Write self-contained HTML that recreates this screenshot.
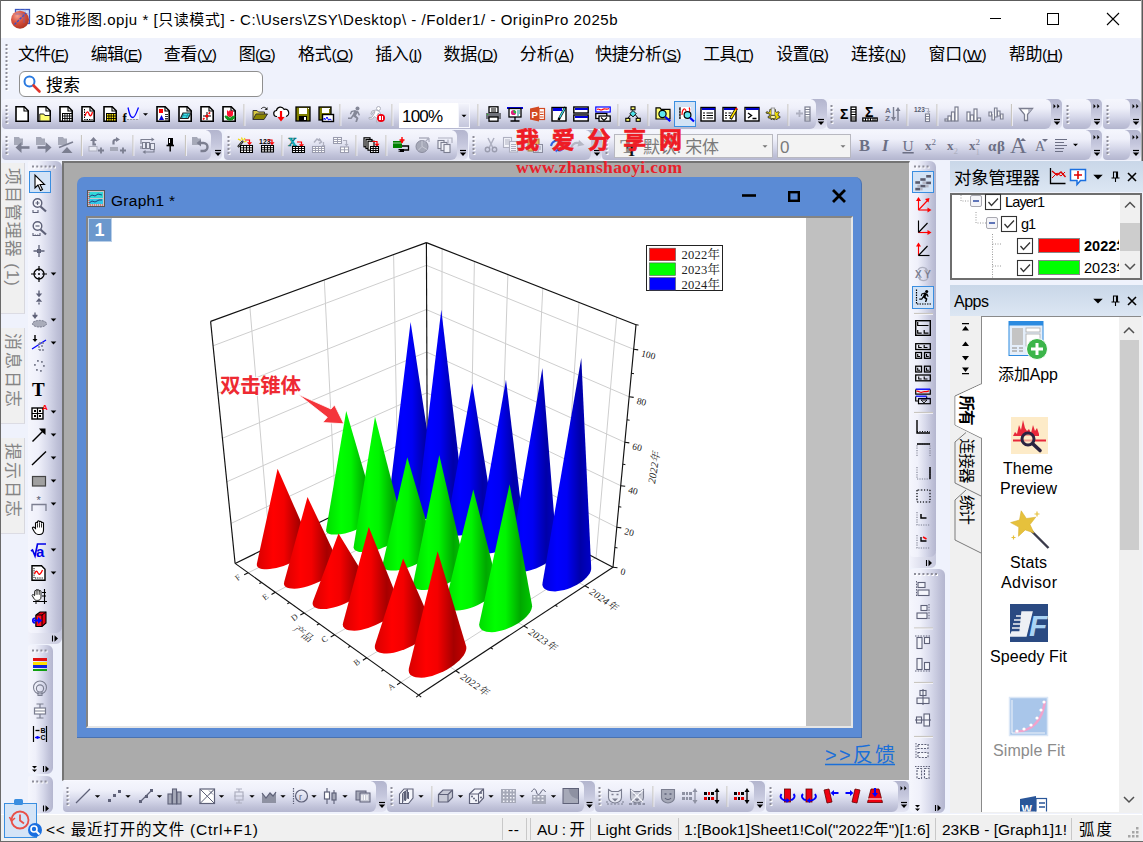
<!DOCTYPE html>
<html lang="zh-CN"><head><meta charset="utf-8"><title>OriginPro 2025b</title>
<style>
html,body{margin:0;padding:0;}
body{width:1143px;height:842px;overflow:hidden;background:#eff2fc;font-family:"Liberation Sans","Noto Sans CJK SC",sans-serif;}
#app{position:relative;width:1143px;height:842px;overflow:hidden;}
#app div{position:absolute;box-sizing:border-box;}
#ov{position:absolute;left:0;top:0;}
#ov text{font-family:"Liberation Sans","Noto Sans CJK SC",sans-serif;white-space:pre;}
.tb{background:linear-gradient(#f4f5fc 0%,#eceef8 35%,#c9cbe0 75%,#b3b4cc 100%);border-radius:4px;}
.tbv{background:linear-gradient(90deg,#f4f5fc 0%,#eceef8 35%,#c9cbe0 75%,#b3b4cc 100%);border-radius:4px;}
</style></head><body><div id="app">
<div style="left:0px;top:0px;width:1143px;height:842px;background:#eff2fc;"></div>
<div style="left:0px;top:0px;width:1143px;height:38px;background:#fff;"></div>
<div style="left:0px;top:0px;width:1143px;height:1px;background:#5c5c5c;"></div>
<div style="left:0px;top:0px;width:1px;height:842px;background:#6a6a6a;"></div>
<div style="left:1141px;top:0px;width:1px;height:161px;background:#a8a8a8;"></div>
<div style="left:1142px;top:0px;width:1px;height:161px;background:#5a5a5a;"></div>
<div style="left:0px;top:841px;width:1143px;height:1px;background:#6a6a6a;"></div>
<div style="left:19px;top:71px;width:244px;height:26px;background:#fff;border:1px solid #8f8f8f;border-radius:6px;"></div>
<div style="left:62px;top:161px;width:848px;height:620px;background:#ababab;border-left:2px solid #747474;border-top:2px solid #747474;border-right:1px solid #f8f8ff;border-bottom:1px solid #f8f8ff;"></div>
<div style="left:77px;top:177px;width:785px;height:561px;background:#5b8bd5;border-radius:7px 7px 0 0;border-right:1px solid #4a72b0;border-bottom:1px solid #4a72b0;"></div>
<div style="left:86px;top:216px;width:767px;height:512px;background:#c0c0c0;border:2px solid #848484;border-right-color:#e6e6e6;border-bottom-color:#e6e6e6;"></div>
<div style="left:88px;top:218px;width:718px;height:508px;background:#fff;"></div>
<div style="left:88px;top:218px;width:24px;height:24px;background:#6b98cd;border:1px solid #b9cfe8;"></div>
<div style="left:1px;top:814px;width:1141px;height:27px;background:#f0f0f0;border-top:1px solid #fff;"></div>
<div style="left:502px;top:818px;width:1px;height:22px;background:#c8c8c8;"></div>
<div style="left:526px;top:818px;width:1px;height:22px;background:#c8c8c8;"></div>
<div style="left:530px;top:818px;width:1px;height:22px;background:#c8c8c8;"></div>
<div style="left:590px;top:818px;width:1px;height:22px;background:#c8c8c8;"></div>
<div style="left:678px;top:818px;width:1px;height:22px;background:#c8c8c8;"></div>
<div style="left:935px;top:818px;width:1px;height:22px;background:#c8c8c8;"></div>
<div style="left:1071px;top:818px;width:1px;height:22px;background:#c8c8c8;"></div>
<div style="left:811px;top:99px;width:16px;height:30px;background:linear-gradient(#b3b5ce 0%,#c4c6dc 45%,#e3e4f2 100%);border-radius:0 5px 5px 0;"></div>
<div style="left:2px;top:99px;width:814px;height:30px;background:linear-gradient(#f5f6fd 0%,#eff0fa 30%,#d6d8ea 60%,#bfc1d8 85%,#b4b6cf 100%);border-radius:4px 6px 6px 4px;"></div>
<div style="left:1046px;top:99px;width:16px;height:30px;background:linear-gradient(#b3b5ce 0%,#c4c6dc 45%,#e3e4f2 100%);border-radius:0 5px 5px 0;"></div>
<div style="left:827px;top:99px;width:224px;height:30px;background:linear-gradient(#f5f6fd 0%,#eff0fa 30%,#d6d8ea 60%,#bfc1d8 85%,#b4b6cf 100%);border-radius:4px 6px 6px 4px;"></div>
<div style="left:1086px;top:99px;width:16px;height:30px;background:linear-gradient(#b3b5ce 0%,#c4c6dc 45%,#e3e4f2 100%);border-radius:0 5px 5px 0;"></div>
<div style="left:1063px;top:99px;width:28px;height:30px;background:linear-gradient(#f5f6fd 0%,#eff0fa 30%,#d6d8ea 60%,#bfc1d8 85%,#b4b6cf 100%);border-radius:4px 6px 6px 4px;"></div>
<div style="left:1125px;top:99px;width:16px;height:30px;background:linear-gradient(#b3b5ce 0%,#c4c6dc 45%,#e3e4f2 100%);border-radius:0 5px 5px 0;"></div>
<div style="left:1103px;top:99px;width:27px;height:30px;background:linear-gradient(#f5f6fd 0%,#eff0fa 30%,#d6d8ea 60%,#bfc1d8 85%,#b4b6cf 100%);border-radius:4px 6px 6px 4px;"></div>
<div style="left:674px;top:101px;width:22px;height:26px;background:#d3e3f6;border:1px solid #3a8ee0;"></div>
<div style="left:399px;top:103px;width:59px;height:25px;background:#fff;"></div>
<div style="left:458px;top:103px;width:12px;height:25px;background:linear-gradient(#f2f3fb,#c4c6dc);border:1px solid #f6f7fd;"></div>
<div style="left:206px;top:130px;width:16px;height:30px;background:linear-gradient(#b3b5ce 0%,#c4c6dc 45%,#e3e4f2 100%);border-radius:0 5px 5px 0;"></div>
<div style="left:2px;top:130px;width:209px;height:30px;background:linear-gradient(#f5f6fd 0%,#eff0fa 30%,#d6d8ea 60%,#bfc1d8 85%,#b4b6cf 100%);border-radius:4px 6px 6px 4px;"></div>
<div style="left:452px;top:130px;width:16px;height:30px;background:linear-gradient(#b3b5ce 0%,#c4c6dc 45%,#e3e4f2 100%);border-radius:0 5px 5px 0;"></div>
<div style="left:224px;top:130px;width:233px;height:30px;background:linear-gradient(#f5f6fd 0%,#eff0fa 30%,#d6d8ea 60%,#bfc1d8 85%,#b4b6cf 100%);border-radius:4px 6px 6px 4px;"></div>
<div style="left:586px;top:130px;width:16px;height:30px;background:linear-gradient(#b3b5ce 0%,#c4c6dc 45%,#e3e4f2 100%);border-radius:0 5px 5px 0;"></div>
<div style="left:469px;top:130px;width:122px;height:30px;background:linear-gradient(#f5f6fd 0%,#eff0fa 30%,#d6d8ea 60%,#bfc1d8 85%,#b4b6cf 100%);border-radius:4px 6px 6px 4px;"></div>
<div style="left:1086px;top:130px;width:16px;height:30px;background:linear-gradient(#b3b5ce 0%,#c4c6dc 45%,#e3e4f2 100%);border-radius:0 5px 5px 0;"></div>
<div style="left:602px;top:130px;width:489px;height:30px;background:linear-gradient(#f5f6fd 0%,#eff0fa 30%,#d6d8ea 60%,#bfc1d8 85%,#b4b6cf 100%);border-radius:4px 6px 6px 4px;"></div>
<div style="left:1125px;top:130px;width:16px;height:30px;background:linear-gradient(#b3b5ce 0%,#c4c6dc 45%,#e3e4f2 100%);border-radius:0 5px 5px 0;"></div>
<div style="left:1103px;top:130px;width:27px;height:30px;background:linear-gradient(#f5f6fd 0%,#eff0fa 30%,#d6d8ea 60%,#bfc1d8 85%,#b4b6cf 100%);border-radius:4px 6px 6px 4px;"></div>
<div style="left:614px;top:134px;width:159px;height:24px;background:#f3f3f3;border:1px solid #b8b8c0;"></div>
<div style="left:777px;top:134px;width:74px;height:24px;background:#f3f3f3;border:1px solid #b8b8c0;"></div>
<div style="left:1px;top:163px;width:24px;height:151px;background:#f0f0f0;border-right:1px solid #d8d8de;border-bottom:1px solid #dcdce4;"></div>
<div style="left:1px;top:328px;width:24px;height:96px;background:#f0f0f0;border-right:1px solid #d8d8de;border-bottom:1px solid #dcdce4;"></div>
<div style="left:1px;top:438px;width:24px;height:96px;background:#f0f0f0;border-right:1px solid #d8d8de;border-bottom:1px solid #dcdce4;"></div>
<div style="left:28px;top:628px;width:34px;height:16px;background:linear-gradient(90deg,#f1f2fb,#c6c8dd);border-radius:0 0 6px 4px;"></div>
<div style="left:28px;top:161px;width:34px;height:472px;background:linear-gradient(90deg,#f5f6fd 0%,#eff0fa 30%,#d6d8ea 60%,#bfc1d8 85%,#b4b6cf 100%);border-radius:2px 6px 6px 4px;"></div>
<div style="left:29px;top:171px;width:22px;height:22px;background:#d3e3f6;border:1px solid #3a8ee0;"></div>
<div style="left:28px;top:645px;width:25px;height:129px;background:linear-gradient(90deg,#f5f6fd 0%,#eff0fa 30%,#d6d8ea 60%,#bfc1d8 85%,#b4b6cf 100%);border-radius:2px 6px 6px 4px;"></div>
<div style="left:28px;top:776px;width:25px;height:37px;background:linear-gradient(90deg,#f5f6fd 0%,#eff0fa 30%,#d6d8ea 60%,#bfc1d8 85%,#b4b6cf 100%);border-radius:2px 6px 6px 4px;"></div>
<div style="left:910px;top:552px;width:26px;height:15.5px;background:linear-gradient(90deg,#f1f2fb,#c6c8dd);border-radius:0 0 5px 4px;"></div>
<div style="left:910px;top:161px;width:26px;height:396px;background:linear-gradient(90deg,#f5f6fd 0%,#eff0fa 30%,#d6d8ea 60%,#bfc1d8 85%,#b4b6cf 100%);border-radius:2px 6px 6px 4px;"></div>
<div style="left:912px;top:171px;width:22px;height:22px;background:#d3e3f6;border:1px solid #3a8ee0;"></div>
<div style="left:912px;top:286px;width:22px;height:23px;background:#d3e3f6;border:1px solid #3a8ee0;"></div>
<div style="left:910px;top:568.5px;width:35px;height:244.5px;background:linear-gradient(90deg,#f5f6fd 0%,#eff0fa 30%,#d6d8ea 60%,#bfc1d8 85%,#b4b6cf 100%);border-radius:2px 6px 6px 4px;"></div>
<div style="left:371px;top:781px;width:16px;height:31px;background:linear-gradient(#b3b5ce 0%,#c4c6dc 45%,#e3e4f2 100%);border-radius:0 5px 5px 0;"></div>
<div style="left:63px;top:781px;width:313px;height:31px;background:linear-gradient(#f5f6fd 0%,#eff0fa 30%,#d6d8ea 60%,#bfc1d8 85%,#b4b6cf 100%);border-radius:4px 6px 6px 4px;"></div>
<div style="left:579px;top:781px;width:16px;height:31px;background:linear-gradient(#b3b5ce 0%,#c4c6dc 45%,#e3e4f2 100%);border-radius:0 5px 5px 0;"></div>
<div style="left:387px;top:781px;width:197px;height:31px;background:linear-gradient(#f5f6fd 0%,#eff0fa 30%,#d6d8ea 60%,#bfc1d8 85%,#b4b6cf 100%);border-radius:4px 6px 6px 4px;"></div>
<div style="left:749px;top:781px;width:16px;height:31px;background:linear-gradient(#b3b5ce 0%,#c4c6dc 45%,#e3e4f2 100%);border-radius:0 5px 5px 0;"></div>
<div style="left:595px;top:781px;width:159px;height:31px;background:linear-gradient(#f5f6fd 0%,#eff0fa 30%,#d6d8ea 60%,#bfc1d8 85%,#b4b6cf 100%);border-radius:4px 6px 6px 4px;"></div>
<div style="left:893px;top:781px;width:16px;height:31px;background:linear-gradient(#b3b5ce 0%,#c4c6dc 45%,#e3e4f2 100%);border-radius:0 5px 5px 0;"></div>
<div style="left:766px;top:781px;width:132px;height:31px;background:linear-gradient(#f5f6fd 0%,#eff0fa 30%,#d6d8ea 60%,#bfc1d8 85%,#b4b6cf 100%);border-radius:4px 6px 6px 4px;"></div>
<div style="left:950px;top:161px;width:193px;height:31px;background:linear-gradient(#c9d7e8,#dce6f3);"></div>
<div style="left:950px;top:193px;width:192px;height:87px;background:#fff;border:2px solid #6e6e6e;"></div>
<div style="left:1120px;top:195px;width:20px;height:83px;background:#f0f0f0;"></div>
<div style="left:1120px;top:223px;width:20px;height:28px;background:#cdcdcd;"></div>
<div style="left:950px;top:285px;width:193px;height:31px;background:linear-gradient(#c9d7e8,#dce6f3);"></div>
<div style="left:950px;top:316px;width:192px;height:497px;background:#f0f0f0;"></div>
<div style="left:981px;top:316px;width:160px;height:496px;background:#fff;border-left:1px solid #8a8a8a;border-top:1px solid #8a8a8a;"></div>
<div style="left:1119px;top:317px;width:22px;height:495px;background:#f0f0f0;"></div>
<div style="left:1120px;top:340px;width:19px;height:210px;background:#cdcdcd;"></div>
<svg id="ov" width="1143" height="842" viewBox="0 0 1143 842">
<defs><radialGradient id="sph" cx=".35" cy=".3" r=".8"><stop offset="0" stop-color="#f4a090"/><stop offset=".45" stop-color="#d9523e"/><stop offset="1" stop-color="#a8301e"/></radialGradient><linearGradient id="gr"><stop offset="0" stop-color="#d80000"/><stop offset=".3" stop-color="#ff0000"/><stop offset=".5" stop-color="#f40000"/><stop offset=".78" stop-color="#a60000"/><stop offset="1" stop-color="#c80000"/></linearGradient><linearGradient id="gg"><stop offset="0" stop-color="#00dc00"/><stop offset=".3" stop-color="#00ff00"/><stop offset=".5" stop-color="#00f400"/><stop offset=".78" stop-color="#00a800"/><stop offset="1" stop-color="#00c800"/></linearGradient><linearGradient id="gb"><stop offset="0" stop-color="#0000dc"/><stop offset=".3" stop-color="#0000ff"/><stop offset=".5" stop-color="#0000f4"/><stop offset=".78" stop-color="#0000a8"/><stop offset="1" stop-color="#0000c8"/></linearGradient><clipPath id="wcc"><rect x="1000" y="790" width="60" height="21.500"/></clipPath></defs>
<text x="35.5" y="25" font-size="15" textLength="582" lengthAdjust="spacing">3D锥形图.opju * [只读模式] - C:\Users\ZSY\Desktop\ - /Folder1/ - OriginPro 2025b</text>
<path d="M990 18.5h11" stroke="#000" stroke-width="1" fill="none"/>
<rect x="1047.5" y="13.5" width="11" height="11" stroke="#000" stroke-width="1" fill="none"/>
<path d="M1107 13l12 12M1119 13l-12 12" stroke="#000" stroke-width="1.1" fill="none"/>
<g><rect x="15.500" y="9.500" width="14" height="14" fill="#d8e2f6" stroke="#3a56c0" stroke-width="1.300"/><path d="M20 9.500v14M25 9.500v14M15.500 14h14M15.500 19h14" stroke="#9ab0e8" stroke-width=".8"/><circle cx="20" cy="19.700" r="9" fill="url(#sph)"/><path d="M14.500 24.500 L26 13" stroke="#3a4fc8" stroke-width="1.400" stroke-dasharray="2.500 1.200"/><path d="M15.500 14h8.500v9" stroke="#5a6ad0" stroke-width=".8" fill="none" opacity=".7"/></g>
<text x="18" y="59.5" font-size="17" textLength="51" lengthAdjust="spacing">文件<tspan font-size="15.5">(<tspan text-decoration="underline">F</tspan>)</tspan></text>
<text x="90.75" y="59.5" font-size="17" textLength="51.75" lengthAdjust="spacing">编辑<tspan font-size="15.5">(<tspan text-decoration="underline">E</tspan>)</tspan></text>
<text x="163.75" y="59.5" font-size="17" textLength="53.25" lengthAdjust="spacing">查看<tspan font-size="15.5">(<tspan text-decoration="underline">V</tspan>)</tspan></text>
<text x="238.75" y="59.5" font-size="17" textLength="37" lengthAdjust="spacing">图<tspan font-size="15.5">(<tspan text-decoration="underline">G</tspan>)</tspan></text>
<text x="298" y="59.5" font-size="17" textLength="55.5" lengthAdjust="spacing">格式<tspan font-size="15.5">(<tspan text-decoration="underline">O</tspan>)</tspan></text>
<text x="375.25" y="59.5" font-size="17" textLength="47" lengthAdjust="spacing">插入<tspan font-size="15.5">(<tspan text-decoration="underline">I</tspan>)</tspan></text>
<text x="443.5" y="59.5" font-size="17" textLength="54.5" lengthAdjust="spacing">数据<tspan font-size="15.5">(<tspan text-decoration="underline">D</tspan>)</tspan></text>
<text x="519.75" y="59.5" font-size="17" textLength="54.5" lengthAdjust="spacing">分析<tspan font-size="15.5">(<tspan text-decoration="underline">A</tspan>)</tspan></text>
<text x="595.25" y="59.5" font-size="17" textLength="86.25" lengthAdjust="spacing">快捷分析<tspan font-size="15.5">(<tspan text-decoration="underline">S</tspan>)</tspan></text>
<text x="703.25" y="59.5" font-size="17" textLength="50.75" lengthAdjust="spacing">工具<tspan font-size="15.5">(<tspan text-decoration="underline">T</tspan>)</tspan></text>
<text x="776.25" y="59.5" font-size="17" textLength="52.75" lengthAdjust="spacing">设置<tspan font-size="15.5">(<tspan text-decoration="underline">R</tspan>)</tspan></text>
<text x="851" y="59.5" font-size="17" textLength="55.25" lengthAdjust="spacing">连接<tspan font-size="15.5">(<tspan text-decoration="underline">N</tspan>)</tspan></text>
<text x="928.5" y="59.5" font-size="17" textLength="58.25" lengthAdjust="spacing">窗口<tspan font-size="15.5">(<tspan text-decoration="underline">W</tspan>)</tspan></text>
<text x="1008.75" y="59.5" font-size="17" textLength="54.25" lengthAdjust="spacing">帮助<tspan font-size="15.5">(<tspan text-decoration="underline">H</tspan>)</tspan></text>
<rect x="6.5" y="45" width="2" height="2" fill="#fff"/><rect x="5.5" y="44" width="2" height="2" fill="#8e8e9a"/>
<rect x="6.5" y="49" width="2" height="2" fill="#fff"/><rect x="5.5" y="48" width="2" height="2" fill="#8e8e9a"/>
<rect x="6.5" y="53" width="2" height="2" fill="#fff"/><rect x="5.5" y="52" width="2" height="2" fill="#8e8e9a"/>
<rect x="6.5" y="57" width="2" height="2" fill="#fff"/><rect x="5.5" y="56" width="2" height="2" fill="#8e8e9a"/>
<rect x="6.5" y="61" width="2" height="2" fill="#fff"/><rect x="5.5" y="60" width="2" height="2" fill="#8e8e9a"/>
<rect x="6.5" y="65" width="2" height="2" fill="#fff"/><rect x="5.5" y="64" width="2" height="2" fill="#8e8e9a"/>
<rect x="6.5" y="69" width="2" height="2" fill="#fff"/><rect x="5.5" y="68" width="2" height="2" fill="#8e8e9a"/>
<rect x="6.5" y="73" width="2" height="2" fill="#fff"/><rect x="5.5" y="72" width="2" height="2" fill="#8e8e9a"/>
<rect x="6.5" y="77" width="2" height="2" fill="#fff"/><rect x="5.5" y="76" width="2" height="2" fill="#8e8e9a"/>
<rect x="6.5" y="81" width="2" height="2" fill="#fff"/><rect x="5.5" y="80" width="2" height="2" fill="#8e8e9a"/>
<rect x="6.5" y="85" width="2" height="2" fill="#fff"/><rect x="5.5" y="84" width="2" height="2" fill="#8e8e9a"/>
<rect x="6.5" y="89" width="2" height="2" fill="#fff"/><rect x="5.5" y="88" width="2" height="2" fill="#8e8e9a"/>
<text x="46" y="91" font-size="17" textLength="34" lengthAdjust="spacing">搜索</text>
<g fill="none"><circle cx="29.5" cy="81.5" r="5" stroke="#2a7ae0" stroke-width="2"/><path d="M33.5 85.5l6 6" stroke="#e0352b" stroke-width="2.6" stroke-linecap="round"/></g>
<text x="99.5" y="236" font-size="18" fill="#fff" font-weight="bold" text-anchor="middle">1</text>
<text x="111" y="206" font-size="15.5" textLength="64" lengthAdjust="spacing">Graph1 *</text>
<g><rect x="87.5" y="190.5" width="17" height="16" fill="#c8c8c8" stroke="#555" stroke-width="1"/><rect x="89" y="192" width="14" height="6" fill="#30d8d8"/><rect x="89" y="199" width="14" height="5" fill="#30c8e8"/><path d="M89 197l3-2 3 1 3-2 4 1M89 203l3-2 3 1 4-2 3 0" stroke="#204080" stroke-width="1" fill="none"/><path d="M89 192v13h14" stroke="#e03030" stroke-width="1" fill="none" stroke-dasharray="1 1"/></g>
<path d="M742 195.5h14" stroke="#000" stroke-width="2.6"/>
<rect x="789.2" y="192.2" width="9.6" height="8.6" stroke="#000" stroke-width="2.4" fill="none"/>
<path d="M833 190l12 12M845 190l-12 12" stroke="#000" stroke-width="2.8"/>
<text x="825" y="762" font-size="20" textLength="70" lengthAdjust="spacing" fill="#1b6fd8">&gt;&gt;反馈</text>
<path d="M825 764.500h70" stroke="#1b6fd8" stroke-width="1.300"/>
<g><path d="M269.8,546.5L249.9,307.0" stroke="#cecece" stroke-width="1" fill="none"/><path d="M455.8,670.7L271.1,545.9" stroke="#cecece" stroke-width="1" fill="none"/><path d="M335.9,514.4L324.3,279.9" stroke="#cecece" stroke-width="1" fill="none"/><path d="M523.8,625.9L337.9,513.4" stroke="#cecece" stroke-width="1" fill="none"/><path d="M397.8,484.3L393.6,254.6" stroke="#cecece" stroke-width="1" fill="none"/><path d="M584.8,585.8L398.8,483.8" stroke="#cecece" stroke-width="1" fill="none"/><path d="M596.0,558.3L616.6,317.1" stroke="#cecece" stroke-width="1" fill="none"/><path d="M400.9,682.3L595.3,558.0" stroke="#cecece" stroke-width="1" fill="none"/><path d="M562.9,541.0L579.0,302.4" stroke="#cecece" stroke-width="1" fill="none"/><path d="M366.8,657.8L561.4,540.2" stroke="#cecece" stroke-width="1" fill="none"/><path d="M531.0,524.3L542.8,288.2" stroke="#cecece" stroke-width="1" fill="none"/><path d="M334.6,634.8L529.0,523.2" stroke="#cecece" stroke-width="1" fill="none"/><path d="M500.1,508.1L507.9,274.5" stroke="#cecece" stroke-width="1" fill="none"/><path d="M304.2,613.0L498.2,507.1" stroke="#cecece" stroke-width="1" fill="none"/><path d="M470.3,492.5L474.4,261.4" stroke="#cecece" stroke-width="1" fill="none"/><path d="M275.4,592.3L468.9,491.8" stroke="#cecece" stroke-width="1" fill="none"/><path d="M441.4,477.4L442.1,248.8" stroke="#cecece" stroke-width="1" fill="none"/><path d="M248.2,572.8L440.8,477.1" stroke="#cecece" stroke-width="1" fill="none"/><path d="M231.1,523.4L427.1,432.1" stroke="#cecece" stroke-width="1" fill="none"/><path d="M616.8,527.3L427.2,432.2" stroke="#cecece" stroke-width="1" fill="none"/><path d="M226.8,481.8L427.0,392.7" stroke="#cecece" stroke-width="1" fill="none"/><path d="M620.7,485.7L427.0,393.0" stroke="#cecece" stroke-width="1" fill="none"/><path d="M222.4,438.3L426.8,351.9" stroke="#cecece" stroke-width="1" fill="none"/><path d="M624.8,442.3L426.8,352.1" stroke="#cecece" stroke-width="1" fill="none"/><path d="M217.9,393.1L426.7,309.4" stroke="#cecece" stroke-width="1" fill="none"/><path d="M629.2,396.8L426.7,309.7" stroke="#cecece" stroke-width="1" fill="none"/><path d="M213.1,345.8L426.5,265.3" stroke="#cecece" stroke-width="1" fill="none"/><path d="M633.7,349.3L426.5,265.4" stroke="#cecece" stroke-width="1" fill="none"/><path d="M210.6,321.4L426.4,242.6" stroke="#111" stroke-width="1.15" fill="none"/><path d="M426.4,242.6L636.0,324.7" stroke="#111" stroke-width="1.15" fill="none"/><path d="M210.6,321.4L235.1,563.4" stroke="#111" stroke-width="1.15" fill="none"/><path d="M426.4,242.6L427.3,470.0" stroke="#111" stroke-width="1.15" fill="none"/><path d="M636.0,324.7L613.0,567.2" stroke="#111" stroke-width="1.15" fill="none"/><path d="M235.1,563.4L427.3,470.0" stroke="#111" stroke-width="1.15" fill="none"/><path d="M427.3,470.0L613.0,567.2" stroke="#111" stroke-width="1.15" fill="none"/><path d="M235.1,563.4L418.7,695.1" stroke="#111" stroke-width="1.15" fill="none"/><path d="M418.7,695.1L613.0,567.2" stroke="#111" stroke-width="1.15" fill="none"/><path d="M613.0,567.2L617.5,567.8" stroke="#111" stroke-width="1.1" fill="none"/><path d="M614.9,547.5L617.5,547.9" stroke="#111" stroke-width="1" fill="none"/><path d="M616.8,527.3L621.3,527.9" stroke="#111" stroke-width="1.1" fill="none"/><path d="M618.7,506.7L621.3,507.1" stroke="#111" stroke-width="1" fill="none"/><path d="M620.7,485.7L625.2,486.3" stroke="#111" stroke-width="1.1" fill="none"/><path d="M622.8,464.2L625.4,464.6" stroke="#111" stroke-width="1" fill="none"/><path d="M624.8,442.3L629.3,442.9" stroke="#111" stroke-width="1.1" fill="none"/><path d="M627.0,419.8L629.6,420.2" stroke="#111" stroke-width="1" fill="none"/><path d="M629.2,396.8L633.7,397.4" stroke="#111" stroke-width="1.1" fill="none"/><path d="M631.4,373.3L634.0,373.7" stroke="#111" stroke-width="1" fill="none"/><path d="M633.7,349.3L638.2,349.9" stroke="#111" stroke-width="1.1" fill="none"/><path d="M636.0,324.7L638.6,325.1" stroke="#111" stroke-width="1" fill="none"/><path d="M455.8,670.7L459.5,673.2" stroke="#111" stroke-width="1.1" fill="none"/><path d="M490.7,647.7L492.9,649.1" stroke="#111" stroke-width="1.1" fill="none"/><path d="M523.8,625.9L527.7,628.2" stroke="#111" stroke-width="1.1" fill="none"/><path d="M555.1,605.3L557.4,606.6" stroke="#111" stroke-width="1.1" fill="none"/><path d="M584.8,585.8L588.8,587.9" stroke="#111" stroke-width="1.1" fill="none"/><path d="M400.9,682.3L397.1,684.7" stroke="#111" stroke-width="1.1" fill="none"/><path d="M383.6,669.9L381.4,671.3" stroke="#111" stroke-width="1.1" fill="none"/><path d="M366.8,657.8L362.9,660.2" stroke="#111" stroke-width="1.1" fill="none"/><path d="M350.4,646.1L348.2,647.5" stroke="#111" stroke-width="1.1" fill="none"/><path d="M334.6,634.8L330.7,637.0" stroke="#111" stroke-width="1.1" fill="none"/><path d="M319.2,623.7L316.9,625.0" stroke="#111" stroke-width="1.1" fill="none"/><path d="M304.2,613.0L300.3,615.1" stroke="#111" stroke-width="1.1" fill="none"/><path d="M289.6,602.5L287.3,603.7" stroke="#111" stroke-width="1.1" fill="none"/><path d="M275.4,592.3L271.5,594.4" stroke="#111" stroke-width="1.1" fill="none"/><path d="M261.6,582.4L259.3,583.6" stroke="#111" stroke-width="1.1" fill="none"/><path d="M248.2,572.8L244.2,574.8" stroke="#111" stroke-width="1.1" fill="none"/><path d="M418.7,695.1L421.2,697.1" stroke="#111" stroke-width="1.1" fill="none"/><path d="M418.7,695.1L416.2,697.1" stroke="#111" stroke-width="1.1" fill="none"/></g>
<g stroke="none"><path d="M388.9,498.9L389.1,497.6L410.6,322.0L435.2,483.8L435.2,485.0L434.8,486.3L434.0,487.7L432.9,489.2L431.4,490.7L429.5,492.2L427.4,493.8L424.9,495.3L422.3,496.7L419.5,498.0L416.5,499.2L413.5,500.3L410.4,501.3L407.3,502.0L404.4,502.6L401.5,503.0L398.9,503.2L396.5,503.1L394.3,502.9L392.5,502.5L391.0,501.8L390.0,501.0L389.2,500.0Z" fill="url(#gb)"/><path d="M416.7,514.6L416.8,513.3L441.3,309.7L463.4,498.8L463.5,500.0L463.1,501.4L462.4,502.9L461.3,504.4L459.8,506.0L458.0,507.6L455.8,509.2L453.4,510.8L450.8,512.3L447.9,513.7L445.0,515.0L441.9,516.1L438.8,517.1L435.7,517.9L432.7,518.5L429.8,518.9L427.1,519.1L424.6,519.1L422.4,518.8L420.5,518.4L419.0,517.7L417.8,516.8L417.1,515.8Z" fill="url(#gb)"/><path d="M445.9,529.7L472.3,383.4L493.0,514.5L493.1,515.8L492.8,517.2L492.1,518.8L491.0,520.4L489.6,522.1L487.8,523.8L485.7,525.5L483.3,527.1L480.7,528.7L477.8,530.1L474.8,531.5L471.7,532.7L468.6,533.7L465.5,534.6L462.4,535.2L459.5,535.6L456.7,535.8L454.2,535.8L451.9,535.5L450.0,535.0L448.4,534.3L447.1,533.4L446.3,532.3L445.9,531.1Z" fill="url(#gb)"/><path d="M476.4,547.0L506.0,379.7L524.2,532.3L523.9,533.9L523.3,535.5L522.3,537.2L520.9,539.0L519.1,540.7L517.0,542.5L514.7,544.2L512.0,545.9L509.2,547.4L506.2,548.8L503.1,550.1L499.9,551.2L496.7,552.1L493.6,552.7L490.6,553.2L487.8,553.4L485.2,553.4L482.9,553.1L480.9,552.6L479.2,551.8L477.9,550.9L477.0,549.7L476.5,548.4Z" fill="url(#gb)"/><path d="M508.6,565.1L508.9,563.4L542.4,368.0L556.8,549.7L556.7,551.3L556.1,553.0L555.1,554.8L553.8,556.7L552.1,558.6L550.0,560.4L547.7,562.2L545.0,564.0L542.2,565.6L539.2,567.1L536.0,568.4L532.8,569.6L529.6,570.5L526.5,571.2L523.4,571.7L520.6,571.9L517.9,571.8L515.5,571.6L513.4,571.0L511.6,570.2L510.3,569.2L509.3,568.0L508.7,566.7Z" fill="url(#gb)"/><path d="M542.4,584.2L542.6,582.5L581.3,358.0L591.2,568.0L591.1,569.7L590.6,571.5L589.7,573.4L588.4,575.3L586.7,577.3L584.7,579.3L582.4,581.2L579.8,583.0L577.0,584.7L573.9,586.3L570.8,587.7L567.6,588.9L564.3,589.9L561.1,590.6L558.0,591.1L555.1,591.4L552.3,591.3L549.8,591.0L547.6,590.4L545.8,589.6L544.3,588.6L543.3,587.3L542.6,585.9Z" fill="url(#gb)"/><path d="M326.1,529.9L346.2,411.1L375.8,512.2L376.0,513.4L375.9,514.7L375.4,516.1L374.4,517.7L373.0,519.3L371.3,521.0L369.2,522.6L366.8,524.3L364.1,525.9L361.2,527.5L358.1,529.0L354.9,530.3L351.6,531.5L348.3,532.6L345.0,533.4L341.8,534.0L338.8,534.5L336.0,534.6L333.5,534.6L331.3,534.4L329.4,533.9L328.0,533.2L326.9,532.3L326.3,531.2Z" fill="url(#gg)"/><path d="M353.6,547.2L353.8,545.8L375.0,416.7L404.1,529.8L404.1,531.2L403.6,532.7L402.6,534.3L401.3,536.0L399.6,537.8L397.6,539.5L395.2,541.3L392.5,543.0L389.6,544.7L386.4,546.2L383.2,547.6L379.9,548.9L376.5,550.0L373.2,550.9L370.0,551.5L366.9,552.0L364.0,552.2L361.5,552.1L359.2,551.9L357.2,551.3L355.7,550.6L354.6,549.7L353.9,548.5Z" fill="url(#gg)"/><path d="M382.6,565.4L382.7,563.9L407.3,457.3L433.7,547.0L433.6,548.5L433.2,550.1L432.3,551.8L431.0,553.6L429.4,555.4L427.3,557.3L425.0,559.2L422.3,561.0L419.4,562.7L416.2,564.3L413.0,565.8L409.6,567.1L406.2,568.3L402.8,569.2L399.6,569.9L396.4,570.4L393.5,570.6L390.8,570.6L388.5,570.3L386.5,569.7L384.9,569.0L383.7,568.0L382.9,566.8Z" fill="url(#gg)"/><path d="M413.1,584.5L413.2,582.9L439.3,455.1L464.7,565.2L464.7,566.7L464.4,568.4L463.6,570.2L462.3,572.1L460.7,574.0L458.7,576.0L456.3,578.0L453.7,579.9L450.7,581.7L447.6,583.4L444.3,585.0L440.9,586.4L437.5,587.6L434.1,588.6L430.7,589.3L427.5,589.8L424.6,590.0L421.8,590.0L419.4,589.7L417.3,589.1L415.6,588.3L414.4,587.2L413.5,586.0Z" fill="url(#gg)"/><path d="M445.3,603.0L445.8,601.2L473.3,489.4L497.4,584.3L497.5,586.0L497.2,587.7L496.4,589.6L495.3,591.6L493.7,593.6L491.7,595.7L489.4,597.8L486.7,599.8L483.8,601.7L480.7,603.5L477.4,605.2L474.0,606.7L470.5,607.9L467.0,609.0L463.6,609.7L460.4,610.3L457.3,610.5L454.5,610.5L452.0,610.1L449.8,609.5L448.1,608.7L446.7,607.6L445.8,606.2L445.3,604.7Z" fill="url(#gg)"/><path d="M479.2,624.2L479.6,622.3L509.6,484.2L531.9,604.5L532.1,606.2L531.8,608.1L531.2,610.1L530.0,612.2L528.5,614.3L526.6,616.5L524.3,618.7L521.7,620.8L518.8,622.9L515.6,624.8L512.3,626.5L508.9,628.1L505.3,629.4L501.8,630.5L498.4,631.3L495.1,631.9L491.9,632.2L489.0,632.1L486.4,631.8L484.2,631.1L482.3,630.2L480.9,629.1L479.9,627.6L479.3,626.0Z" fill="url(#gg)"/><path d="M256.8,564.1L277.6,468.8L310.9,544.5L311.1,545.8L310.8,547.3L310.1,548.9L308.9,550.6L307.3,552.4L305.3,554.2L302.9,556.1L300.2,557.9L297.3,559.7L294.0,561.4L290.6,563.1L287.1,564.5L283.5,565.9L279.9,567.0L276.4,567.9L273.0,568.6L269.8,569.1L266.8,569.3L264.2,569.3L261.9,569.0L260.0,568.5L258.5,567.7L257.5,566.7L256.9,565.5Z" fill="url(#gr)"/><path d="M284.0,583.2L284.3,581.6L307.5,497.0L338.6,562.6L338.9,563.9L338.7,565.5L338.0,567.2L336.9,568.9L335.3,570.8L333.3,572.8L331.0,574.7L328.3,576.7L325.3,578.6L322.1,580.4L318.6,582.1L315.1,583.6L311.4,585.0L307.8,586.2L304.2,587.2L300.7,588.0L297.5,588.4L294.4,588.7L291.7,588.6L289.3,588.3L287.4,587.8L285.8,587.0L284.7,585.9L284.1,584.6Z" fill="url(#gr)"/><path d="M312.6,603.3L312.9,601.6L338.5,533.4L367.1,580.3L367.9,581.6L368.2,583.0L368.0,584.6L367.4,586.4L366.3,588.3L364.8,590.3L362.9,592.3L360.5,594.4L357.8,596.4L354.8,598.4L351.6,600.3L348.1,602.1L344.5,603.8L340.9,605.3L337.2,606.5L333.5,607.6L330.0,608.3L326.7,608.9L323.6,609.1L320.8,609.1L318.3,608.7L316.3,608.1L314.6,607.3L313.5,606.2L312.8,604.8Z" fill="url(#gr)"/><path d="M342.8,624.6L343.1,622.8L368.8,527.0L398.7,601.6L399.1,603.1L399.0,604.8L398.4,606.7L397.4,608.7L395.9,610.8L394.0,612.9L391.7,615.1L389.0,617.3L386.0,619.4L382.8,621.4L379.3,623.3L375.7,625.1L372.0,626.6L368.2,627.9L364.5,629.0L360.9,629.9L357.5,630.4L354.3,630.7L351.5,630.6L348.9,630.3L346.8,629.7L345.1,628.7L343.9,627.6L343.1,626.2Z" fill="url(#gr)"/><path d="M374.8,647.0L375.0,645.1L375.6,643.1L403.1,558.6L431.3,622.7L431.7,624.3L431.7,626.1L431.2,628.1L430.2,630.2L428.8,632.4L426.9,634.7L424.7,637.0L422.0,639.3L419.0,641.5L415.8,643.7L412.3,645.7L408.6,647.6L404.9,649.2L401.1,650.6L397.3,651.8L393.7,652.7L390.2,653.2L386.9,653.5L383.9,653.5L381.3,653.1L379.1,652.4L377.3,651.5L376.0,650.2L375.1,648.7Z" fill="url(#gr)"/><path d="M408.7,670.8L408.8,668.8L437.6,551.3L466.3,646.8L466.3,648.7L465.9,650.8L465.0,653.0L463.6,655.4L461.8,657.8L459.6,660.2L456.9,662.6L454.0,665.0L450.7,667.3L447.2,669.4L443.5,671.4L439.7,673.1L435.9,674.6L432.1,675.9L428.3,676.8L424.8,677.4L421.4,677.7L418.4,677.6L415.7,677.3L413.3,676.6L411.5,675.5L410.0,674.2L409.1,672.7Z" fill="url(#gr)"/></g>
<text x="620.0" y="574.2" font-size="9.5" fill="#222" style='font-family:"Liberation Serif","Noto Serif CJK SC",serif' transform="rotate(13 620.0 574.2)">0</text>
<text x="623.8" y="534.3" font-size="9.5" fill="#222" style='font-family:"Liberation Serif","Noto Serif CJK SC",serif' transform="rotate(13 623.8 534.3)">20</text>
<text x="627.7" y="492.7" font-size="9.5" fill="#222" style='font-family:"Liberation Serif","Noto Serif CJK SC",serif' transform="rotate(13 627.7 492.7)">40</text>
<text x="631.8" y="449.3" font-size="9.5" fill="#222" style='font-family:"Liberation Serif","Noto Serif CJK SC",serif' transform="rotate(13 631.8 449.3)">60</text>
<text x="636.2" y="403.8" font-size="9.5" fill="#222" style='font-family:"Liberation Serif","Noto Serif CJK SC",serif' transform="rotate(13 636.2 403.8)">80</text>
<text x="640.7" y="356.3" font-size="9.5" fill="#222" style='font-family:"Liberation Serif","Noto Serif CJK SC",serif' transform="rotate(13 640.7 356.3)">100</text>
<text x="655" y="484" font-size="10.5" textLength="32" lengthAdjust="spacing" fill="#222" style='font-family:"Liberation Serif","Noto Serif CJK SC",serif' font-style="italic" transform="rotate(-81 655 484)">2022年</text>
<text x="459.8" y="678.2" font-size="10" textLength="31.5" lengthAdjust="spacing" fill="#222" style='font-family:"Liberation Serif","Noto Serif CJK SC",serif' font-style="italic" transform="rotate(35 459.8 678.2)">2022年</text>
<text x="527.8" y="633.4" font-size="10" textLength="31.5" lengthAdjust="spacing" fill="#222" style='font-family:"Liberation Serif","Noto Serif CJK SC",serif' font-style="italic" transform="rotate(35 527.8 633.4)">2023年</text>
<text x="588.8" y="593.3" font-size="10" textLength="31.5" lengthAdjust="spacing" fill="#222" style='font-family:"Liberation Serif","Noto Serif CJK SC",serif' font-style="italic" transform="rotate(35 588.8 593.3)">2024年</text>
<text x="390.4" y="690.8" font-size="8.5" fill="#333" style='font-family:"Liberation Serif","Noto Serif CJK SC",serif' transform="rotate(-38 390.4 690.8)">A</text>
<text x="356.3" y="666.3" font-size="8.5" fill="#333" style='font-family:"Liberation Serif","Noto Serif CJK SC",serif' transform="rotate(-38 356.3 666.3)">B</text>
<text x="324.1" y="643.3" font-size="8.5" fill="#333" style='font-family:"Liberation Serif","Noto Serif CJK SC",serif' transform="rotate(-38 324.1 643.3)">C</text>
<text x="293.7" y="621.5" font-size="8.5" fill="#333" style='font-family:"Liberation Serif","Noto Serif CJK SC",serif' transform="rotate(-38 293.7 621.5)">D</text>
<text x="264.9" y="600.8" font-size="8.5" fill="#333" style='font-family:"Liberation Serif","Noto Serif CJK SC",serif' transform="rotate(-38 264.9 600.8)">E</text>
<text x="237.7" y="581.3" font-size="8.5" fill="#333" style='font-family:"Liberation Serif","Noto Serif CJK SC",serif' transform="rotate(-38 237.7 581.3)">F</text>
<text x="292" y="630" font-size="10.5" fill="#222" style='font-family:"Liberation Serif","Noto Serif CJK SC",serif' font-style="italic" transform="rotate(36 292 630)">产品</text>
<rect x="646.5" y="245.5" width="76" height="45" fill="#fff" stroke="#222" stroke-width="1"/>
<rect x="649.5" y="248.2" width="26" height="12.5" fill="#ff0000" stroke="#555" stroke-width=".6"/>
<text x="681.5" y="259.1" font-size="12.5" textLength="38.5" lengthAdjust="spacing" fill="#222" style='font-family:"Liberation Serif","Noto Serif CJK SC",serif'>2022年</text>
<rect x="649.5" y="262.9" width="26" height="12.5" fill="#00ff00" stroke="#555" stroke-width=".6"/>
<text x="681.5" y="273.8" font-size="12.5" textLength="38.5" lengthAdjust="spacing" fill="#222" style='font-family:"Liberation Serif","Noto Serif CJK SC",serif'>2023年</text>
<rect x="649.5" y="277.6" width="26" height="12.5" fill="#0000ff" stroke="#555" stroke-width=".6"/>
<text x="681.5" y="288.5" font-size="12.5" textLength="38.5" lengthAdjust="spacing" fill="#222" style='font-family:"Liberation Serif","Noto Serif CJK SC",serif'>2024年</text>
<text x="220" y="393" font-size="20.5" textLength="81" lengthAdjust="spacing" fill="#ee2a32" font-weight="bold" stroke="#fff" stroke-width="1.300" paint-order="stroke" stroke-linejoin="round">双击锥体</text>
<path d="M298 394.300 L331 409 L334.500 405 L343.800 423.800 L322.800 422.500 L327.300 417.300 Z" fill="#f4353b" stroke="#fff" stroke-width="0.8"/>
<text x="46" y="835" font-size="15.5" textLength="212" lengthAdjust="spacing">&lt;&lt; 最近打开的文件 (Ctrl+F1)</text>
<text x="508" y="835" font-size="15.5" textLength="11" lengthAdjust="spacing">--</text>
<text x="537" y="835" font-size="15.5" textLength="48" lengthAdjust="spacing">AU : 开</text>
<text x="597" y="835" font-size="15.5" textLength="75" lengthAdjust="spacing">Light Grids</text>
<text x="684" y="835" font-size="15.5" textLength="246" lengthAdjust="spacing">1:[Book1]Sheet1!Col("2022年")[1:6]</text>
<text x="942" y="835" font-size="15.5" textLength="125" lengthAdjust="spacing">23KB - [Graph1]1!</text>
<text x="1079" y="835" font-size="15.5" textLength="33" lengthAdjust="spacing">弧度</text>
<rect x="1136" y="835" width="2.500" height="2.500" fill="#a6a6a6"/>
<rect x="1132" y="835" width="2.500" height="2.500" fill="#a6a6a6"/>
<rect x="1128" y="835" width="2.500" height="2.500" fill="#a6a6a6"/>
<rect x="1136" y="831" width="2.500" height="2.500" fill="#a6a6a6"/>
<rect x="1132" y="831" width="2.500" height="2.500" fill="#a6a6a6"/>
<rect x="1136" y="827" width="2.500" height="2.500" fill="#a6a6a6"/>
<rect x="6.5" y="106" width="2" height="2" fill="#fff"/><rect x="5.5" y="105" width="2" height="2" fill="#8e8e9a"/>
<rect x="6.5" y="110" width="2" height="2" fill="#fff"/><rect x="5.5" y="109" width="2" height="2" fill="#8e8e9a"/>
<rect x="6.5" y="114" width="2" height="2" fill="#fff"/><rect x="5.5" y="113" width="2" height="2" fill="#8e8e9a"/>
<rect x="6.5" y="118" width="2" height="2" fill="#fff"/><rect x="5.5" y="117" width="2" height="2" fill="#8e8e9a"/>
<rect x="6.5" y="122" width="2" height="2" fill="#fff"/><rect x="5.5" y="121" width="2" height="2" fill="#8e8e9a"/>
<path d="M818 119.5h6" stroke="#000" stroke-width="1.2"/><path d="M817.8 121.5h6.4l-3.2 3.6z" fill="#000"/>
<rect x="831.5" y="106" width="2" height="2" fill="#fff"/><rect x="830.5" y="105" width="2" height="2" fill="#8e8e9a"/>
<rect x="831.5" y="110" width="2" height="2" fill="#fff"/><rect x="830.5" y="109" width="2" height="2" fill="#8e8e9a"/>
<rect x="831.5" y="114" width="2" height="2" fill="#fff"/><rect x="830.5" y="113" width="2" height="2" fill="#8e8e9a"/>
<rect x="831.5" y="118" width="2" height="2" fill="#fff"/><rect x="830.5" y="117" width="2" height="2" fill="#8e8e9a"/>
<rect x="831.5" y="122" width="2" height="2" fill="#fff"/><rect x="830.5" y="121" width="2" height="2" fill="#8e8e9a"/>
<path d="M1054 119.5h6" stroke="#000" stroke-width="1.2"/><path d="M1053.8 121.5h6.4l-3.2 3.6z" fill="#000"/>
<path d="M1053.5 104l2.2 2.2-2.2 2.2zM1057.3 104l2.2 2.2-2.2 2.2z" fill="#000"/>
<rect x="1067.5" y="106" width="2" height="2" fill="#fff"/><rect x="1066.5" y="105" width="2" height="2" fill="#8e8e9a"/>
<rect x="1067.5" y="110" width="2" height="2" fill="#fff"/><rect x="1066.5" y="109" width="2" height="2" fill="#8e8e9a"/>
<rect x="1067.5" y="114" width="2" height="2" fill="#fff"/><rect x="1066.5" y="113" width="2" height="2" fill="#8e8e9a"/>
<rect x="1067.5" y="118" width="2" height="2" fill="#fff"/><rect x="1066.5" y="117" width="2" height="2" fill="#8e8e9a"/>
<rect x="1067.5" y="122" width="2" height="2" fill="#fff"/><rect x="1066.5" y="121" width="2" height="2" fill="#8e8e9a"/>
<path d="M1094 119.5h6" stroke="#000" stroke-width="1.2"/><path d="M1093.8 121.5h6.4l-3.2 3.6z" fill="#000"/>
<path d="M1093.5 104l2.2 2.2-2.2 2.2zM1097.3 104l2.2 2.2-2.2 2.2z" fill="#000"/>
<rect x="1107.5" y="106" width="2" height="2" fill="#fff"/><rect x="1106.5" y="105" width="2" height="2" fill="#8e8e9a"/>
<rect x="1107.5" y="110" width="2" height="2" fill="#fff"/><rect x="1106.5" y="109" width="2" height="2" fill="#8e8e9a"/>
<rect x="1107.5" y="114" width="2" height="2" fill="#fff"/><rect x="1106.5" y="113" width="2" height="2" fill="#8e8e9a"/>
<rect x="1107.5" y="118" width="2" height="2" fill="#fff"/><rect x="1106.5" y="117" width="2" height="2" fill="#8e8e9a"/>
<rect x="1107.5" y="122" width="2" height="2" fill="#fff"/><rect x="1106.5" y="121" width="2" height="2" fill="#8e8e9a"/>
<path d="M1133 119.5h6" stroke="#000" stroke-width="1.2"/><path d="M1132.8 121.5h6.4l-3.2 3.6z" fill="#000"/>
<path d="M1132.5 104l2.2 2.2-2.2 2.2zM1136.3 104l2.2 2.2-2.2 2.2z" fill="#000"/>
<svg x="15" y="106" width="16" height="16" viewBox="0 0 16 16" overflow="visible"><path d="M1 .8h8.2l4 4V15.2H1z" stroke="#000" fill="#fff" stroke-width="1.6" stroke-linejoin="miter"/><path d="M9 1v4h4" stroke="#000" fill="none" stroke-width="1.1"/></svg>
<svg x="37" y="106" width="16" height="16" viewBox="0 0 16 16" overflow="visible"><path d="M1 .8h8.2l4 4V15.2H1z" stroke="#000" fill="#fff" stroke-width="1.6" stroke-linejoin="miter"/><path d="M9 1v4h4" stroke="#000" fill="none" stroke-width="1.1"/><path d="M2.8 8h4l1 1.500h5.200v5.500H2.800z" stroke="#222" fill="#ffff70" stroke-width="1"/></svg>
<svg x="59" y="106" width="16" height="16" viewBox="0 0 16 16" overflow="visible"><path d="M1 .8h8.2l4 4V15.2H1z" stroke="#000" fill="#fff" stroke-width="1.6" stroke-linejoin="miter"/><path d="M9 1v4h4" stroke="#000" fill="none" stroke-width="1.1"/><rect x="3.5" y="7.5" width="9.5" height="7.5" fill="#fff" stroke="#000" stroke-width="1"/><path d="M5.9 7.5v7.5M8.2 7.5v7.5M10.6 7.5v7.5M3.5 10.0h9.5M3.5 12.5h9.5" stroke="#000" fill="none" stroke-width="0.9"/></svg>
<svg x="81" y="106" width="16" height="16" viewBox="0 0 16 16" overflow="visible"><path d="M1 .8h8.2l4 4V15.2H1z" stroke="#000" fill="#fff" stroke-width="1.6" stroke-linejoin="miter"/><path d="M9 1v4h4" stroke="#000" fill="none" stroke-width="1.1"/><path d="M3.5 3v10.5h8" stroke="#000" fill="none" stroke-width="1" stroke-dasharray="1.5 1"/><path d="M4 10c1.5-5 3-5 4-2s2.5 2 3.5-2" stroke="#ff0000" fill="none" stroke-width="1.3"/></svg>
<svg x="103" y="106" width="16" height="16" viewBox="0 0 16 16" overflow="visible"><path d="M1 .8h8.2l4 4V15.2H1z" stroke="#000" fill="#fff" stroke-width="1.6" stroke-linejoin="miter"/><path d="M9 1v4h4" stroke="#000" fill="none" stroke-width="1.1"/><rect x="3.5" y="7.5" width="9.5" height="7.5" fill="#ffe800" stroke="#000" stroke-width="1"/><path d="M5.9 7.5v7.5M8.2 7.5v7.5M10.6 7.5v7.5M3.5 10.0h9.5M3.5 12.5h9.5" stroke="#000" fill="none" stroke-width="0.9"/></svg>
<svg x="123" y="106" width="16" height="16" viewBox="0 0 16 16" overflow="visible"><text x="-.5" y="15.5" font-size="13" font-weight="bold" style='font-family:"Liberation Serif",serif'>f</text><rect x="4" y="0" width="12" height="13" fill="#f2f2ff" stroke="none" stroke-width="1" shape-rendering="crispEdges"/><path d="M5 1.5c2 9 3 10 5 10s3-4 5.5-10" stroke="#0000ff" fill="none" stroke-width="1.3"/><path d="M4 13.5h12" stroke="#999" fill="none" stroke-width="1" stroke-dasharray="2 1"/></svg>
<svg x="156" y="106" width="16" height="16" viewBox="0 0 16 16" overflow="visible"><path d="M1 .8h8.2l4 4V15.2H1z" stroke="#000" fill="#fff" stroke-width="1.6" stroke-linejoin="miter"/><path d="M9 1v4h4" stroke="#000" fill="none" stroke-width="1.1"/><rect x="3" y="3" width="4" height="4" fill="#ff0000" stroke="none" stroke-width="1" shape-rendering="crispEdges"/><path d="M3 14l2.5-5 2.5 5z" fill="#0000e0"/><path d="M9 8.5h3M9 10.5h3M9 12.5h3M9 14h3" stroke="#333" fill="none" stroke-width="1"/></svg>
<svg x="178" y="106" width="16" height="16" viewBox="0 0 16 16" overflow="visible"><path d="M1 .8h8.2l4 4V15.2H1z" stroke="#000" fill="#fff" stroke-width="1.6" stroke-linejoin="miter"/><path d="M9 1v4h4" stroke="#000" fill="none" stroke-width="1.1"/><path d="M5 7h8l-3 5.5H2.5z" stroke="#222" fill="#40e0e8" stroke-width="1.2"/><path d="M4.5 9.7h7M6 7.5l-2 4.5M10 7.5l-2 4.5" stroke="#1a8a9a" fill="none" stroke-width="0.8"/></svg>
<svg x="200" y="106" width="16" height="16" viewBox="0 0 16 16" overflow="visible"><path d="M1 .8h8.2l4 4V15.2H1z" stroke="#000" fill="#fff" stroke-width="1.6" stroke-linejoin="miter"/><path d="M9 1v4h4" stroke="#000" fill="none" stroke-width="1.1"/><path d="M3 13.5l8-8" stroke="#ff0000" fill="none" stroke-width="1.6" stroke-dasharray="2 2"/><path d="M7 6v8M3 10h8" stroke="#000" fill="none" stroke-width="1"/><circle cx="7" cy="10" r="1.6" fill="#f00"/></svg>
<svg x="222" y="106" width="16" height="16" viewBox="0 0 16 16" overflow="visible"><path d="M1 .8h8.2l4 4V15.2H1z" stroke="#000" fill="#fff" stroke-width="1.6" stroke-linejoin="miter"/><path d="M9 1v4h4" stroke="#000" fill="none" stroke-width="1.1"/><path d="M5 4l1.5 1.5L8 4l1.5 1.5L11 4v4a3 3 0 0 1-6 0z" fill="#ff1030"/><path d="M8 10v4M8 14c-3 0-4.5-1.5-5-4 2.5 0 4.5 1.5 5 4c.5-2.5 2.5-4 5-4-.5 2.5-2 4-5 4" stroke="#0a8a1a" fill="#10a020" stroke-width="1"/></svg>
<svg x="252" y="106" width="16" height="16" viewBox="0 0 16 16" overflow="visible"><path d="M1 13.5V4.5h4l1.5 1.5h6v2.5" stroke="#333" fill="#d8c840" stroke-width="1"/><path d="M1 13.5l3-5.5h11.5l-3.5 5.5z" fill="#8a8400" stroke="#333" stroke-width="1"/><path d="M9 3c2-2.5 4.5-2 5.5 0" stroke="#222" fill="none" stroke-width="1"/><path d="M15.5 1v3h-3z" fill="#222"/></svg>
<svg x="273" y="106" width="16" height="16" viewBox="0 0 16 16" overflow="visible"><path d="M4 10.5a3 3 0 0 1-.5-6 4 4 0 0 1 7.5-1.2 3.2 3.2 0 0 1 2 7.2" stroke="#000" fill="#fff" stroke-width="1.2"/><path d="M8 5v7" stroke="#ff0000" fill="none" stroke-width="2.2"/><path d="M4.5 11h7L8 15.5z" fill="#f00"/></svg>
<svg x="295" y="106" width="16" height="16" viewBox="0 0 16 16" overflow="visible"><rect x="1" y="1" width="14" height="14" fill="#808000" stroke="#000" stroke-width="1.3"/><rect x="4" y="1.5" width="8" height="6" fill="#fff" stroke="none" stroke-width="1" shape-rendering="crispEdges"/><rect x="4" y="10" width="8" height="5" fill="#000" stroke="none" stroke-width="1" shape-rendering="crispEdges"/><rect x="9" y="11" width="2" height="3" fill="#fff" stroke="none" stroke-width="1" shape-rendering="crispEdges"/><rect x="13" y="2" width="1" height="1" fill="#fff" stroke="none" stroke-width="1" shape-rendering="crispEdges"/></svg>
<svg x="318" y="106" width="16" height="16" viewBox="0 0 16 16" overflow="visible"><rect x="1" y="1" width="12" height="13" fill="#808000" stroke="#000" stroke-width="1.3"/><rect x="3.5" y="1.5" width="7" height="5" fill="#fff" stroke="none" stroke-width="1" shape-rendering="crispEdges"/><rect x="11" y="2" width="1" height="1" fill="#fff" stroke="none" stroke-width="1" shape-rendering="crispEdges"/><rect x="4.5" y="8.5" width="11" height="7" fill="#fff" stroke="#000" stroke-width="1.4"/><path d="M6 14v-2l1.5 1.5 1.5-2.5 1.5 3 1.5-1 1.5 1" stroke="#0000ff" fill="none" stroke-width="1"/></svg>
<svg x="347" y="106" width="16" height="16" viewBox="0 0 16 16" overflow="visible"><g fill="#858898"><circle cx="10.5" cy="2.5" r="2"/><path d="M4 5l4-1 3.5 1.5L13 9l-1.2.7L10.5 7 9 9.5l2.5 2.5L10 16H8.3l1-3.5-3-2L4.5 13H1v-1.5h2.7L6 8l1-2.5L5 6.2 4 8.5 2.8 8z"/></g></svg>
<svg x="369" y="106" width="16" height="16" viewBox="0 0 16 16" overflow="visible"><g fill="#fff" stroke="#a8aab8" stroke-width=".9"><circle cx="9.5" cy="2.5" r="2"/><path d="M3 5l4-1 3.5 1.5L12 9l-1.2.7L9.5 7 8 9.5l2.5 2.5L9 16H7.3l1-3.5-3-2L3.5 13H0v-1.5h2.7L5 8l1-2.5L4 6.2 3 8.5 1.8 8z"/></g><circle cx="12" cy="12" r="4" fill="#f00010"/><rect x="10.3" y="10" width="1.3" height="4" fill="#fff" stroke="none" stroke-width="1" shape-rendering="crispEdges"/><rect x="12.5" y="10" width="1.3" height="4" fill="#fff" stroke="none" stroke-width="1" shape-rendering="crispEdges"/></svg>
<svg x="485" y="106" width="16" height="16" viewBox="0 0 16 16" overflow="visible"><rect x="4" y="0.8" width="9" height="6" fill="#fff" stroke="#000" stroke-width="1.3"/><path d="M6 3h5M6 5h5" stroke="#000" fill="none" stroke-width="1"/><rect x="0.5" y="6.5" width="15" height="6" fill="#70727a" stroke="none" stroke-width="1" shape-rendering="crispEdges"/><rect x="4" y="11" width="9" height="4.2" fill="#fff" stroke="#000" stroke-width="1.3"/><rect x="1.5" y="7.5" width="1.5" height="1.5" fill="#20d020" stroke="none" stroke-width="1" shape-rendering="crispEdges"/></svg>
<svg x="507" y="106" width="16" height="16" viewBox="0 0 16 16" overflow="visible"><rect x="0" y="0.5" width="16" height="2" fill="#0000e0" stroke="none" stroke-width="1" shape-rendering="crispEdges"/><rect x="2" y="2.5" width="12" height="8.5" fill="#fff" stroke="#000" stroke-width="1.3"/><circle cx="6.5" cy="6.5" r="2.6" fill="#e02080"/><path d="M6.5 6.5V3.9a2.6 2.6 0 0 1 2.3 3.8z" fill="#20c040"/><path d="M10 5h3M10 7h3M10 9h2" stroke="#0a8a8a" fill="none" stroke-width="1"/><path d="M8 11v3.5M3.5 15h9" stroke="#000" fill="none" stroke-width="1.3"/></svg>
<svg x="529" y="106" width="16" height="16" viewBox="0 0 16 16" overflow="visible"><path d="M1 2.5L10 .5v15L1 13.5z" fill="#d24a22"/><rect x="10" y="2.5" width="5.5" height="11" fill="#fff" stroke="#d24a22" stroke-width="1.2"/><path d="M11 6h3.5M11 8.5h3.5M11 11h3.5" stroke="#d24a22" fill="none" stroke-width="1.2"/><text x="2.6" y="11.8" font-size="9.5" font-weight="bold" fill="#fff">P</text></svg>
<svg x="551" y="106" width="16" height="16" viewBox="0 0 16 16" overflow="visible"><rect x="1" y="1.5" width="14" height="13.5" fill="#fff" stroke="#000" stroke-width="1.4"/><rect x="2" y="2.2" width="9" height="2.3" fill="#0000e0" stroke="none" stroke-width="1" shape-rendering="crispEdges"/><path d="M14.5 1L8.5 12l-1 2" stroke="#000" fill="none" stroke-width="2.4"/><path d="M13.8 2.2L8.6 11.6" stroke="#40e0e8" fill="none" stroke-width="1.2"/></svg>
<svg x="573" y="106" width="16" height="16" viewBox="0 0 16 16" overflow="visible"><rect x="0.8" y="1" width="14.4" height="6" fill="#fff" stroke="#000" stroke-width="1.4"/><rect x="1.5" y="1.7" width="13" height="2" fill="#0000d8" stroke="none" stroke-width="1" shape-rendering="crispEdges"/><rect x="0.8" y="9" width="14.4" height="6" fill="#fff" stroke="#000" stroke-width="1.4"/><rect x="1.5" y="9.7" width="13" height="2" fill="#0000d8" stroke="none" stroke-width="1" shape-rendering="crispEdges"/></svg>
<svg x="595" y="106" width="16" height="16" viewBox="0 0 16 16" overflow="visible"><rect x="0.8" y="1" width="14.4" height="5" fill="#fff" stroke="#0000ff" stroke-width="1.2"/><path d="M2 3.5c2-2 3 2 5.5 0s3.5 1 6.5-1" stroke="#ff0000" fill="none" stroke-width="1.1"/><rect x="0.8" y="7.5" width="11" height="5" fill="#fff" stroke="#000" stroke-width="1.3"/><rect x="4" y="10" width="11.2" height="5.2" fill="#fff" stroke="#000" stroke-width="1.3"/><path d="M6 11.5l3 3 3-3" stroke="#000" fill="none" stroke-width="1.1"/></svg>
<svg x="625" y="106" width="16" height="16" viewBox="0 0 16 16" overflow="visible"><rect x="6" y="0.8" width="4" height="3" fill="#ffff70" stroke="#000" stroke-width="1.1"/><path d="M8 4.5l3.2 3.2L8 10.9 4.8 7.7z" fill="#50e0e8" stroke="#000" stroke-width="1"/><path d="M5.5 9l-3 3.5M10.5 9l3 3.5" stroke="#000" fill="none" stroke-width="1"/><rect x="0.8" y="12.3" width="4" height="3" fill="#ffff70" stroke="#000" stroke-width="1.1"/><rect x="11.2" y="12.3" width="4" height="3" fill="#ffff70" stroke="#000" stroke-width="1.1"/></svg>
<svg x="655" y="106" width="16" height="16" viewBox="0 0 16 16" overflow="visible"><path d="M1 13V1.8h4l1.2 1.5H15V13z" stroke="#000" fill="#ffff70" stroke-width="1.2"/><circle cx="7.5" cy="8" r="3.6" fill="#60e8f0" stroke="#000" stroke-width="1.2"/><path d="M10.2 10.8l5 4.5" stroke="#0000ff" fill="none" stroke-width="2.2"/></svg>
<svg x="678" y="106" width="16" height="16" viewBox="0 0 16 16" overflow="visible"><rect x="1" y="1" width="12" height="12" fill="#fff" stroke="none" stroke-width="1" shape-rendering="crispEdges"/><path d="M2 1v12M1 3h1.5M1 6h1.5M1 9h1.5M1 12h1.5" stroke="#000" fill="none" stroke-width="1"/><path d="M4 9c0-6 3-8 4-4M11 1.5c1 1 1 3 .5 5" stroke="#ff0000" fill="none" stroke-width="1.1"/><circle cx="9.5" cy="9" r="3.4" fill="#60e8f0" stroke="#000" stroke-width="1.2"/><path d="M12 11.7l4 3.8" stroke="#0000ff" fill="none" stroke-width="2.2"/></svg>
<svg x="700" y="106" width="16" height="16" viewBox="0 0 16 16" overflow="visible"><rect x="1" y="1.5" width="14" height="13.5" fill="#fff" stroke="#000" stroke-width="1.4"/><rect x="1.5" y="2" width="13" height="2.4" fill="#0000c8" stroke="none" stroke-width="1" shape-rendering="crispEdges"/><path d="M3 7h2M6.5 7h6.5M3 9.5h2M6.5 9.5h6.5M3 12h2M6.5 12h6.5" stroke="#000" fill="none" stroke-width="1.2"/></svg>
<svg x="722" y="106" width="16" height="16" viewBox="0 0 16 16" overflow="visible"><rect x="1" y="1.5" width="13" height="13.5" fill="#fff" stroke="#000" stroke-width="1.4"/><rect x="1.5" y="2" width="12" height="2.2" fill="#0000c8" stroke="none" stroke-width="1" shape-rendering="crispEdges"/><path d="M3 7h2M3 9.5h2M3 12h2M6.5 7h3M6.5 9.5h2" stroke="#000" fill="none" stroke-width="1.2"/><path d="M14.5 2.5l-6 10.5" stroke="#000" fill="none" stroke-width="3"/><path d="M14 3.5L9 12.2" stroke="#ffe000" fill="none" stroke-width="1.6"/><path d="M14.8 2l-.9 1.6" stroke="#ff0000" fill="none" stroke-width="2"/></svg>
<svg x="744" y="106" width="16" height="16" viewBox="0 0 16 16" overflow="visible"><rect x="1" y="1.5" width="14" height="13.5" fill="#fff" stroke="#000" stroke-width="1.4"/><rect x="1.5" y="2" width="13" height="2.2" fill="#0000c8" stroke="none" stroke-width="1" shape-rendering="crispEdges"/><path d="M4 7l3.5 2.5L4 12M8.5 12.5h4" stroke="#000" fill="none" stroke-width="1.4"/></svg>
<svg x="765" y="106" width="16" height="16" viewBox="0 0 16 16" overflow="visible"><g stroke="#222" stroke-width=".8" fill="#f0e000"><path d="M8 4.5l1-1.5 1.5.6-.2 1.8 1.5 1 1.6-.8.9 1.4-1.3 1.2.3 1.7 1.7.5-.2 1.6-1.8.1-.9 1.5-1.7-.6-1.3.9-1.4-.9-1.7.6-.9-1.5-1.8-.1-.2-1.6 1.7-.5.3-1.7L.9 7l.9-1.4 1.6.8 1.5-1-.2-1.8L6.2 3z"/></g><rect x="6.3" y="2" width="3.4" height="7" fill="#e8e8e8" stroke="#888" stroke-width="0.8"/><ellipse cx="8" cy="11" rx="3" ry="1.6" fill="#fff8a0" stroke="#222" stroke-width=".7"/></svg>
<svg x="795" y="106" width="16" height="16" viewBox="0 0 16 16" overflow="visible"><path d="M1 7.5h7M4.5 4v7" stroke="#aeb0c0" fill="none" stroke-width="1.8"/><rect x="10" y="1" width="5" height="14" fill="#fff" stroke="#7b7e90" stroke-width="1.2"/><path d="M10 3.5h5M10 6h5M10 8.5h5M10 11h5M10 13h5" stroke="#7b7e90" fill="none" stroke-width="1"/></svg>
<svg x="841" y="106" width="16" height="16" viewBox="0 0 16 16" overflow="visible"><text x="-1" y="12.5" font-size="14" font-weight="bold">Σ</text><rect x="10" y="1" width="5" height="14" fill="#fff" stroke="#000" stroke-width="1.3"/><path d="M10 3.5h5M10 6h5M10 8.5h5M10 11h5M10 13h5" stroke="#000" fill="none" stroke-width="1"/></svg>
<svg x="862" y="106" width="16" height="16" viewBox="0 0 16 16" overflow="visible"><text x="3" y="10.5" font-size="14" font-weight="bold">Σ</text><rect x="0.8" y="12" width="14.4" height="3" fill="#fff" stroke="#000" stroke-width="1.3"/><path d="M3.5 12v3M6 12v3M8.5 12v3M11 12v3M13 12v3" stroke="#000" fill="none" stroke-width="1"/></svg>
<svg x="885" y="106" width="16" height="16" viewBox="0 0 16 16" overflow="visible"><text x="0" y="7" font-size="8" fill="#6d7084" font-weight="bold">A</text><text x="0" y="15" font-size="8" fill="#6d7084" font-weight="bold">Z</text><path d="M8.5 1v12M13 15V3" stroke="#7b7e90" fill="none" stroke-width="1.4"/><path d="M6 11h5l-2.5 4zM10.5 5h5L13 1z" fill="#7b7e90"/></svg>
<svg x="914" y="106" width="16" height="16" viewBox="0 0 16 16" overflow="visible"><text x="0" y="6" font-size="6.5" font-weight="bold" fill="#555a70">123</text><path d="M10.5 2.5h4v3" stroke="#aeb0c0" fill="none" stroke-width="1.2"/><path d="M12.5 5h4l-2 2.5z" fill="#aeb0c0"/><rect x="11.5" y="8" width="4" height="7.5" fill="#fff" stroke="#7b7e90" stroke-width="1.1"/><path d="M11.5 10.5h4M11.5 13h4" stroke="#7b7e90" fill="none" stroke-width="1"/></svg>
<svg x="944" y="106" width="16" height="16" viewBox="0 0 16 16" overflow="visible"><rect x="1" y="13" width="3" height="2" fill="#fff" stroke="#7b7e90" stroke-width="1.2"/><rect x="4" y="10" width="3" height="5" fill="#fff" stroke="#7b7e90" stroke-width="1.2"/><rect x="7.5" y="6" width="3" height="9" fill="#fff" stroke="#7b7e90" stroke-width="1.2"/><rect x="11" y="1" width="3" height="14" fill="#fff" stroke="#7b7e90" stroke-width="1.2"/></svg>
<svg x="966" y="106" width="16" height="16" viewBox="0 0 16 16" overflow="visible"><rect x="1" y="6" width="3" height="9" fill="#fff" stroke="#7b7e90" stroke-width="1.2"/><rect x="4.5" y="9" width="3" height="6" fill="#fff" stroke="#7b7e90" stroke-width="1.2"/><rect x="8" y="3" width="3" height="12" fill="#fff" stroke="#7b7e90" stroke-width="1.2"/><rect x="11.5" y="12" width="3" height="3" fill="#fff" stroke="#7b7e90" stroke-width="1.2"/></svg>
<svg x="988" y="106" width="16" height="16" viewBox="0 0 16 16" overflow="visible"><path d="M1 6h2.5v4H1zM4 8v6h2.5V6M6.5 2h2.5v9H6.5zM9.5 5h2.5v5H9.5zM12.5 8h2.5v5h-2.5z" stroke="#7b7e90" fill="#fff" stroke-width="1.2"/></svg>
<svg x="1018" y="106" width="16" height="16" viewBox="0 0 16 16" overflow="visible"><path d="M1.5 2.5h13l-5 6v6h-3v-6z" stroke="#7b7e90" fill="#fff" stroke-width="1.3"/><path d="M10 3h4l-3.5 4.5z" fill="#aeb0c0"/></svg>
<path d="M143.0 113.25h5l-2.5 2.5z" fill="#000"/>
<path d="M244 104v22" stroke="#c9c6c0" stroke-width="1.2"/><path d="M245 104v22" stroke="#f4f4fb" stroke-width=".8"/>
<path d="M340 104v22" stroke="#c9c6c0" stroke-width="1.2"/><path d="M341 104v22" stroke="#f4f4fb" stroke-width=".8"/>
<path d="M392 104v22" stroke="#c9c6c0" stroke-width="1.2"/><path d="M393 104v22" stroke="#f4f4fb" stroke-width=".8"/>
<path d="M478 104v22" stroke="#c9c6c0" stroke-width="1.2"/><path d="M479 104v22" stroke="#f4f4fb" stroke-width=".8"/>
<path d="M618 104v22" stroke="#c9c6c0" stroke-width="1.2"/><path d="M619 104v22" stroke="#f4f4fb" stroke-width=".8"/>
<path d="M648 104v22" stroke="#c9c6c0" stroke-width="1.2"/><path d="M649 104v22" stroke="#f4f4fb" stroke-width=".8"/>
<path d="M788 104v22" stroke="#c9c6c0" stroke-width="1.2"/><path d="M789 104v22" stroke="#f4f4fb" stroke-width=".8"/>
<path d="M907 104v22" stroke="#c9c6c0" stroke-width="1.2"/><path d="M908 104v22" stroke="#f4f4fb" stroke-width=".8"/>
<path d="M937 104v22" stroke="#c9c6c0" stroke-width="1.2"/><path d="M938 104v22" stroke="#f4f4fb" stroke-width=".8"/>
<path d="M1011.5 104v22" stroke="#c9c6c0" stroke-width="1.2"/><path d="M1012.5 104v22" stroke="#f4f4fb" stroke-width=".8"/>
<text x="402" y="122" font-size="17" textLength="41" lengthAdjust="spacing">100%</text>
<path d="M461.5 114.75h5l-2.5 2.5z" fill="#000"/>
<rect x="6.5" y="137" width="2" height="2" fill="#fff"/><rect x="5.5" y="136" width="2" height="2" fill="#8e8e9a"/>
<rect x="6.5" y="141" width="2" height="2" fill="#fff"/><rect x="5.5" y="140" width="2" height="2" fill="#8e8e9a"/>
<rect x="6.5" y="145" width="2" height="2" fill="#fff"/><rect x="5.5" y="144" width="2" height="2" fill="#8e8e9a"/>
<rect x="6.5" y="149" width="2" height="2" fill="#fff"/><rect x="5.5" y="148" width="2" height="2" fill="#8e8e9a"/>
<rect x="6.5" y="153" width="2" height="2" fill="#fff"/><rect x="5.5" y="152" width="2" height="2" fill="#8e8e9a"/>
<path d="M215 150.5h6" stroke="#000" stroke-width="1.2"/><path d="M214.8 152.5h6.4l-3.2 3.6z" fill="#000"/>
<rect x="228.5" y="137" width="2" height="2" fill="#fff"/><rect x="227.5" y="136" width="2" height="2" fill="#8e8e9a"/>
<rect x="228.5" y="141" width="2" height="2" fill="#fff"/><rect x="227.5" y="140" width="2" height="2" fill="#8e8e9a"/>
<rect x="228.5" y="145" width="2" height="2" fill="#fff"/><rect x="227.5" y="144" width="2" height="2" fill="#8e8e9a"/>
<rect x="228.5" y="149" width="2" height="2" fill="#fff"/><rect x="227.5" y="148" width="2" height="2" fill="#8e8e9a"/>
<rect x="228.5" y="153" width="2" height="2" fill="#fff"/><rect x="227.5" y="152" width="2" height="2" fill="#8e8e9a"/>
<path d="M460 150.5h6" stroke="#000" stroke-width="1.2"/><path d="M459.8 152.5h6.4l-3.2 3.6z" fill="#000"/>
<rect x="473.5" y="137" width="2" height="2" fill="#fff"/><rect x="472.5" y="136" width="2" height="2" fill="#8e8e9a"/>
<rect x="473.5" y="141" width="2" height="2" fill="#fff"/><rect x="472.5" y="140" width="2" height="2" fill="#8e8e9a"/>
<rect x="473.5" y="145" width="2" height="2" fill="#fff"/><rect x="472.5" y="144" width="2" height="2" fill="#8e8e9a"/>
<rect x="473.5" y="149" width="2" height="2" fill="#fff"/><rect x="472.5" y="148" width="2" height="2" fill="#8e8e9a"/>
<rect x="473.5" y="153" width="2" height="2" fill="#fff"/><rect x="472.5" y="152" width="2" height="2" fill="#8e8e9a"/>
<path d="M594 150.5h6" stroke="#000" stroke-width="1.2"/><path d="M593.8 152.5h6.4l-3.2 3.6z" fill="#000"/>
<rect x="606.5" y="137" width="2" height="2" fill="#fff"/><rect x="605.5" y="136" width="2" height="2" fill="#8e8e9a"/>
<rect x="606.5" y="141" width="2" height="2" fill="#fff"/><rect x="605.5" y="140" width="2" height="2" fill="#8e8e9a"/>
<rect x="606.5" y="145" width="2" height="2" fill="#fff"/><rect x="605.5" y="144" width="2" height="2" fill="#8e8e9a"/>
<rect x="606.5" y="149" width="2" height="2" fill="#fff"/><rect x="605.5" y="148" width="2" height="2" fill="#8e8e9a"/>
<rect x="606.5" y="153" width="2" height="2" fill="#fff"/><rect x="605.5" y="152" width="2" height="2" fill="#8e8e9a"/>
<path d="M1094 150.5h6" stroke="#000" stroke-width="1.2"/><path d="M1093.8 152.5h6.4l-3.2 3.6z" fill="#000"/>
<path d="M1093.5 135l2.2 2.2-2.2 2.2zM1097.3 135l2.2 2.2-2.2 2.2z" fill="#000"/>
<rect x="1107.5" y="137" width="2" height="2" fill="#fff"/><rect x="1106.5" y="136" width="2" height="2" fill="#8e8e9a"/>
<rect x="1107.5" y="141" width="2" height="2" fill="#fff"/><rect x="1106.5" y="140" width="2" height="2" fill="#8e8e9a"/>
<rect x="1107.5" y="145" width="2" height="2" fill="#fff"/><rect x="1106.5" y="144" width="2" height="2" fill="#8e8e9a"/>
<rect x="1107.5" y="149" width="2" height="2" fill="#fff"/><rect x="1106.5" y="148" width="2" height="2" fill="#8e8e9a"/>
<rect x="1107.5" y="153" width="2" height="2" fill="#fff"/><rect x="1106.5" y="152" width="2" height="2" fill="#8e8e9a"/>
<path d="M1133 150.5h6" stroke="#000" stroke-width="1.2"/><path d="M1132.8 152.5h6.4l-3.2 3.6z" fill="#000"/>
<path d="M1132.5 135l2.2 2.2-2.2 2.2zM1136.3 135l2.2 2.2-2.2 2.2z" fill="#000"/>
<svg x="14" y="137" width="16" height="16" viewBox="0 0 16 16" overflow="visible"><path d="M0 0h5l1 1.5h3V8H0z" fill="#a6a9b8"/><path d="M15.5 10.5H5" stroke="#7b7e90" fill="none" stroke-width="2.6"/><path d="M1.5 10.5l6-5.5v11z" fill="#7b7e90"/></svg>
<svg x="36" y="137" width="16" height="16" viewBox="0 0 16 16" overflow="visible"><path d="M0 0h5l1 1.5h3V8H0z" fill="#a6a9b8"/><path d="M1.5 10.5H11" stroke="#7b7e90" fill="none" stroke-width="2.6"/><path d="M15.5 10.5l-6-5.5v11z" fill="#7b7e90"/></svg>
<svg x="58" y="137" width="16" height="16" viewBox="0 0 16 16" overflow="visible"><path d="M0 0h5l1 1.5h3V8H0z" fill="#a6a9b8"/><path d="M1 10.5L15 5" stroke="#7b7e90" fill="none" stroke-width="1.8"/><path d="M3.5 16l5.5-6 5.5 6z" fill="#7b7e90"/></svg>
<svg x="88" y="137" width="16" height="16" viewBox="0 0 16 16" overflow="visible"><path d="M8 7.5h-2.5V3.5" stroke="#7b7e90" fill="none" stroke-width="2.2"/><path d="M2 4l3.5-4 3.5 4z" fill="#7b7e90"/><rect x="1" y="9.5" width="8" height="4.5" fill="#e8eaf4" stroke="#aeb0c0" stroke-width="1"/><path d="M10 13.5h6M13 10.5v6" stroke="#7b7e90" fill="none" stroke-width="1.8"/></svg>
<svg x="110" y="137" width="16" height="16" viewBox="0 0 16 16" overflow="visible"><path d="M3.5 7.5V4.5c0-2 1.5-2 4-2" stroke="#7b7e90" fill="none" stroke-width="2.2"/><path d="M6 0l4 2.5-4 2.5z" fill="#7b7e90"/><rect x="0" y="9.5" width="8" height="4.5" fill="#a6a9b8" stroke="none" stroke-width="1" shape-rendering="crispEdges"/><path d="M10 13.5h6M13 10.5v6" stroke="#7b7e90" fill="none" stroke-width="1.8"/></svg>
<svg x="140" y="137" width="16" height="16" viewBox="0 0 16 16" overflow="visible"><rect x="2.5" y="5.5" width="3" height="6" fill="#e8eaf4" stroke="#7b7e90" stroke-width="1"/><rect x="6.5" y="5.5" width="3" height="6" fill="#e8eaf4" stroke="#7b7e90" stroke-width="1"/><rect x="10.5" y="6.5" width="4" height="6" fill="#e8eaf4" stroke="#7b7e90" stroke-width="1"/><path d="M1 7V2.5h11M5 15h9V13" stroke="#7b7e90" fill="none" stroke-width="1.1"/><path d="M11.5 .5l3 2-3 2zM5.5 13l-3 2 3 2z" fill="#7b7e90"/><path d="M1 9v3" stroke="#7b7e90" fill="none" stroke-width="1.1"/></svg>
<svg x="163" y="137" width="16" height="16" viewBox="0 0 16 16" overflow="visible"><rect x="5" y="1" width="4.5" height="7" fill="#000" stroke="none" stroke-width="1" shape-rendering="crispEdges"/><rect x="6" y="2" width="1" height="4" fill="#fff" stroke="none" stroke-width="1" shape-rendering="crispEdges"/><path d="M3.5 8.5h7.5" stroke="#000" fill="none" stroke-width="1.6"/><path d="M7.2 9v5.5" stroke="#000" fill="none" stroke-width="1.4"/></svg>
<svg x="192" y="137" width="16" height="16" viewBox="0 0 16 16" overflow="visible"><path d="M0 0h5l1 1.5h3V8H0z" fill="#a6a9b8"/><path d="M8 6h3.5a3 3 0 0 1 0 8H8.5" stroke="#7b7e90" fill="none" stroke-width="2.4"/><path d="M4.5 6L9 2.5v7z" fill="#7b7e90"/></svg>
<svg x="237" y="137" width="16" height="16" viewBox="0 0 16 16" overflow="visible"><rect x="3.5" y="8.5" width="12" height="7" fill="#fff" stroke="#000" stroke-width="1.05"/><path d="M6.5 8.5v7M9.5 8.5v7M12.5 8.5v7M3.5 10.8h12M3.5 13.2h12" stroke="#000" fill="none" stroke-width="0.9450000000000001"/><path d="M8 3h4.5v2.5" stroke="#ff0000" fill="none" stroke-width="1.2"/><path d="M10 5.2h5l-2.5 3z" fill="#f00"/><path d="M1 10L6 4" stroke="#000" fill="none" stroke-width="2"/><path d="M1.5 9.5L5.5 4.5" stroke="#ddd" fill="none" stroke-width="0.7"/><path d="M4.5 .5l1 2.5M8 1L6.5 3.5M1 2l3 1.5M9.5 4.5l-2.5.3" stroke="#f0d800" fill="none" stroke-width="1.2"/></svg>
<svg x="259" y="137" width="16" height="16" viewBox="0 0 16 16" overflow="visible"><text x="0" y="6.5" font-size="7" font-weight="bold">123</text><path d="M8.5 3h4.5v2.5" stroke="#ff0000" fill="none" stroke-width="1.2"/><path d="M10.5 5.2h5l-2.5 3z" fill="#f00"/><rect x="2.5" y="8.5" width="12" height="6.5" fill="#fff" stroke="#000" stroke-width="1.05"/><path d="M5.5 8.5v6.5M8.5 8.5v6.5M11.5 8.5v6.5M2.5 10.7h12M2.5 12.8h12" stroke="#000" fill="none" stroke-width="0.9450000000000001"/></svg>
<svg x="289" y="137" width="16" height="16" viewBox="0 0 16 16" overflow="visible"><text x="-1" y="8.5" font-size="12" font-weight="bold" fill="#10c8d0" stroke="#006a70" stroke-width=".5" style='font-family:"Liberation Serif",serif'>X</text><path d="M8 5h4.5v2.5" stroke="#ff0000" fill="none" stroke-width="1.2"/><path d="M10 7.2h5l-2.5 3z" fill="#f00"/><rect x="3.5" y="9.5" width="12" height="6" fill="#fff" stroke="#000" stroke-width="1.05"/><path d="M6.5 9.5v6M9.5 9.5v6M12.5 9.5v6M3.5 11.5h12M3.5 13.5h12" stroke="#000" fill="none" stroke-width="0.9450000000000001"/></svg>
<svg x="311" y="137" width="16" height="16" viewBox="0 0 16 16" overflow="visible"><path d="M3 5.5l3-3.5 2.5 2M8 1.5l2.5 3.5L8 6.5" stroke="#aeb0c0" fill="none" stroke-width="1.5"/><path d="M12.5 5v4" stroke="#aeb0c0" fill="none" stroke-width="1.2"/><path d="M10.5 8h4l-2 2.5z" fill="#aeb0c0"/><rect x="1.5" y="9.5" width="12" height="6" fill="#fff" stroke="#9a9cae" stroke-width="1.05"/><path d="M4.5 9.5v6M7.5 9.5v6M10.5 9.5v6M1.5 11.5h12M1.5 13.5h12" stroke="#9a9cae" fill="none" stroke-width="0.9450000000000001"/></svg>
<svg x="333" y="137" width="16" height="16" viewBox="0 0 16 16" overflow="visible"><rect x="0.5" y="0.5" width="8" height="6" fill="#fff" stroke="#9a9cae" stroke-width="1.05"/><path d="M4.5 0.5v6M0.5 2.5h8M0.5 4.5h8" stroke="#9a9cae" fill="none" stroke-width="0.9450000000000001"/><path d="M10 3.5h3.5v4" stroke="#aeb0c0" fill="none" stroke-width="1.2"/><path d="M11.5 7h4l-2 2.5z" fill="#aeb0c0"/><rect x="7.5" y="10" width="8" height="5.5" fill="#fff" stroke="#9a9cae" stroke-width="1.05"/><path d="M11.5 10v5.5M7.5 12.8h8" stroke="#9a9cae" fill="none" stroke-width="0.9450000000000001"/></svg>
<svg x="363" y="137" width="16" height="16" viewBox="0 0 16 16" overflow="visible"><rect x="1" y="0.8" width="6" height="9" fill="#fff" stroke="#000" stroke-width="1.2"/><rect x="3" y="2.5" width="6" height="9" fill="#fff" stroke="#000" stroke-width="1.2"/><rect x="5" y="4.2" width="6" height="9" fill="#e8e8e8" stroke="#000" stroke-width="1.2"/><path d="M9.5 4.5h4.5v2.5" stroke="#ff0000" fill="none" stroke-width="1.2"/><path d="M11.5 6.7h5l-2.5 3z" fill="#f00"/><rect x="7.5" y="9.5" width="8" height="6" fill="#fff" stroke="#000" stroke-width="1.05"/><path d="M10.2 9.5v6M12.8 9.5v6M7.5 11.5h8M7.5 13.5h8" stroke="#000" fill="none" stroke-width="0.9450000000000001"/></svg>
<svg x="393" y="137" width="16" height="16" viewBox="0 0 16 16" overflow="visible"><rect x="0" y="4" width="9" height="7" fill="#008000" stroke="none" stroke-width="1" shape-rendering="crispEdges"/><path d="M0 6h9" stroke="#9ad09a" fill="none" stroke-width="1"/><path d="M9 0v6M6.5 3h5" stroke="#ff0000" fill="none" stroke-width="1.4"/><path d="M7 3.5h4L9 6.5z" fill="#f00"/><path d="M9 9h6.5v4H11" stroke="#000" fill="none" stroke-width="1.3"/><rect x="7" y="11.5" width="4" height="3.5" fill="#000" stroke="none" stroke-width="1" shape-rendering="crispEdges"/><path d="M5.5 12.5h2M5.5 14.2h2" stroke="#000" fill="none" stroke-width="1"/></svg>
<svg x="415" y="137" width="16" height="16" viewBox="0 0 16 16" overflow="visible"><circle cx="7" cy="9.5" r="6" fill="#a6a9b8" stroke="#8a8c9e" stroke-width="1"/><path d="M7 3.5v6l-4 4M7 9.5l5 3" stroke="#c8cad6" fill="none" stroke-width="1"/><path d="M4 1h10M14 1v4M9 6l5-5" stroke="#aeb0c0" fill="none" stroke-width="1.3"/></svg>
<svg x="437" y="137" width="16" height="16" viewBox="0 0 16 16" overflow="visible"><rect x="1" y="3.5" width="6" height="8" fill="#f0f1f8" stroke="#7b7e90" stroke-width="1.1"/><rect x="4" y="5.5" width="6" height="8" fill="#f0f1f8" stroke="#7b7e90" stroke-width="1.1"/><rect x="7" y="7.5" width="6" height="8" fill="#f0f1f8" stroke="#7b7e90" stroke-width="1.1"/><path d="M1 1h14v5M11 2.5v4" stroke="#aeb0c0" fill="none" stroke-width="1.2"/></svg>
<svg x="483" y="137" width="16" height="16" viewBox="0 0 16 16" overflow="visible"><path d="M5 1l5 10M11 1L6 11" stroke="#aeb0c0" fill="none" stroke-width="1.5"/><circle cx="4.5" cy="12.5" r="2.2" fill="none" stroke="#9a9cae" stroke-width="1.4"/><circle cx="11.5" cy="12.5" r="2.2" fill="none" stroke="#9a9cae" stroke-width="1.4"/></svg>
<svg x="503" y="137" width="16" height="16" viewBox="0 0 16 16" overflow="visible"><rect x="0.5" y="0.5" width="8" height="10" fill="#f4f5fb" stroke="#aeb0c0" stroke-width="1.1"/><path d="M2 3h5M2 5h5M2 7h5" stroke="#aeb0c0" fill="none" stroke-width="1"/><rect x="6.5" y="4.5" width="8" height="10.5" fill="#f4f5fb" stroke="#aeb0c0" stroke-width="1.1"/><path d="M8 7.5h5M8 9.5h5M8 11.5h5M8 13.5h5" stroke="#aeb0c0" fill="none" stroke-width="1"/></svg>
<svg x="527" y="137" width="16" height="16" viewBox="0 0 16 16" overflow="visible"><rect x="1" y="2" width="11" height="12" fill="#e8b860" stroke="#a08040" stroke-width="1"/><rect x="4" y="0.5" width="5" height="3" fill="#c8c8d0" stroke="#888" stroke-width="0.8"/><rect x="6.5" y="7.5" width="9" height="8" fill="#dfe3ee" stroke="#8a8c9e" stroke-width="1"/><path d="M8 10h6M8 12h6M8 14h4" stroke="#9a9cae" fill="none" stroke-width="1"/></svg>
<svg x="550" y="137" width="16" height="16" viewBox="0 0 16 16" overflow="visible"><path d="M1 9c1-5 6-7 10-4M15 8c-1 5-6 7-10 4" stroke="#3060e0" fill="none" stroke-width="2"/><path d="M9.5 1.5l4 4.5-5.5.5zM6.5 15.5l-4-4.5 5.5-.5z" fill="#3060e0"/></svg>
<svg x="570" y="137" width="16" height="16" viewBox="0 0 16 16" overflow="visible"><path d="M2 14c-2-6 3-10 9-7" stroke="#b4b6c4" fill="none" stroke-width="2.2"/><path d="M9 3l5.5 5-7 1.5z" fill="#b4b6c4"/></svg>
<path d="M81.5 135v21" stroke="#c9c6c0" stroke-width="1.2"/><path d="M82.5 135v21" stroke="#f4f4fb" stroke-width=".8"/>
<path d="M133 135v21" stroke="#c9c6c0" stroke-width="1.2"/><path d="M134 135v21" stroke="#f4f4fb" stroke-width=".8"/>
<path d="M185.5 135v21" stroke="#c9c6c0" stroke-width="1.2"/><path d="M186.5 135v21" stroke="#f4f4fb" stroke-width=".8"/>
<path d="M282 135v21" stroke="#c9c6c0" stroke-width="1.2"/><path d="M283 135v21" stroke="#f4f4fb" stroke-width=".8"/>
<path d="M356 135v21" stroke="#c9c6c0" stroke-width="1.2"/><path d="M357 135v21" stroke="#f4f4fb" stroke-width=".8"/>
<path d="M386 135v21" stroke="#c9c6c0" stroke-width="1.2"/><path d="M387 135v21" stroke="#f4f4fb" stroke-width=".8"/>
<text x="620" y="152.500" font-size="19" font-weight="bold" fill="#8a8a8a" textLength="16" lengthAdjust="spacingAndGlyphs" style='font-family:"Liberation Serif",serif'>T</text><text x="626.500" y="155.500" font-size="15.500" font-weight="bold" fill="#111" style='font-family:"Liberation Serif",serif'>T</text>
<text x="643" y="153" font-size="17" textLength="76" lengthAdjust="spacing" fill="#7a7a7a">默认: 宋体</text>
<path d="M762.5 145.25h5l-2.5 2.5z" fill="#777"/>
<path d="M840.5 145.25h5l-2.5 2.5z" fill="#777"/>
<text x="780" y="153" font-size="17" fill="#7a7a7a">0</text>
<text x="859" y="151" font-size="16.5" fill="#6c6f84" font-weight="bold" style='font-family:"Liberation Serif",serif'>B</text>
<text x="882" y="151" font-size="16.5" fill="#6c6f84" font-weight="bold" style='font-family:"Liberation Serif",serif' font-style="italic">I</text>
<text x="902.5" y="151" font-size="15.5" fill="#6c6f84" style='font-family:"Liberation Serif",serif' text-decoration="underline">U</text>
<text x="925" y="150" font-size="13" fill="#6c6f84" font-weight="bold" style='font-family:"Liberation Serif",serif'>x<tspan dy="-5" font-size="9" font-weight="normal">2</tspan></text>
<text x="947" y="150" font-size="13" fill="#6c6f84" font-weight="bold" style='font-family:"Liberation Serif",serif'>x<tspan dy="4" font-size="9" font-weight="normal" fill="#aeb0c0">2</tspan></text>
<text x="969" y="150" font-size="13" fill="#6c6f84" font-weight="bold" style='font-family:"Liberation Serif",serif'>x</text>
<text x="975.5" y="145" font-size="9" fill="#6c6f84" style='font-family:"Liberation Serif",serif'>2</text>
<text x="975.5" y="155" font-size="9" fill="#aeb0c0" style='font-family:"Liberation Serif",serif'>1</text>
<text x="988" y="151" font-size="15" textLength="17" lengthAdjust="spacing" fill="#6c6f84" font-weight="bold" style='font-family:"Liberation Serif",serif'>αβ</text>
<text x="1010" y="153" font-size="23" fill="#6c6f84" style='font-family:"Liberation Serif",serif'>A</text>
<path d="M1020 141l3-3 3 3z" fill="#6c6f84"/>
<text x="1035" y="151" font-size="14" fill="#6c6f84" style='font-family:"Liberation Serif",serif'>A</text>
<path d="M1042 139h6l-3 3z" fill="#6c6f84"/>
<path d="M1055 139.5h12M1055 142.5h9M1055 145.5h12M1055 148.5h9M1055 151.5h8" stroke="#6c6f84" stroke-width="1"/>
<path d="M1073.0 143.75h5l-2.5 2.5z" fill="#000"/>
<text x="516" y="147.5" font-size="23" textLength="166" lengthAdjust="spacing" fill="#ee1c25" font-weight="bold" stroke="#ee1c25" stroke-width=".7">我 爱 分 享 网</text>
<text x="516" y="173" font-size="17.5" textLength="166" lengthAdjust="spacing" fill="#e8202a" font-weight="bold" style='font-family:"Liberation Serif",serif'>www.zhanshaoyi.com</text>
<text x="6.5" y="168" font-size="17" textLength="118" lengthAdjust="spacing" fill="#858585" transform="rotate(90 6.5 168)">项目管理器 (1)</text>
<text x="6.5" y="333" font-size="17" textLength="74" lengthAdjust="spacing" fill="#858585" transform="rotate(90 6.5 333)">消息日志</text>
<text x="6.5" y="443" font-size="17" textLength="74" lengthAdjust="spacing" fill="#858585" transform="rotate(90 6.5 443)">提示日志</text>
<rect x="33.0" y="166.5" width="2" height="2" fill="#fff"/><rect x="32.0" y="165.5" width="2" height="2" fill="#8e8e9a"/>
<rect x="37.2" y="166.5" width="2" height="2" fill="#fff"/><rect x="36.2" y="165.5" width="2" height="2" fill="#8e8e9a"/>
<rect x="41.4" y="166.5" width="2" height="2" fill="#fff"/><rect x="40.4" y="165.5" width="2" height="2" fill="#8e8e9a"/>
<rect x="45.6" y="166.5" width="2" height="2" fill="#fff"/><rect x="44.6" y="165.5" width="2" height="2" fill="#8e8e9a"/>
<rect x="49.8" y="166.5" width="2" height="2" fill="#fff"/><rect x="48.8" y="165.5" width="2" height="2" fill="#8e8e9a"/>
<rect x="54.0" y="166.5" width="2" height="2" fill="#fff"/><rect x="53.0" y="165.5" width="2" height="2" fill="#8e8e9a"/>
<path d="M52.5 635.5v6" stroke="#000" stroke-width="1.1"/><path d="M54.5 635.3v6.400l3.500-3.200z" fill="#000"/>
<svg x="31" y="174" width="16" height="16" viewBox="0 0 16 16" overflow="visible"><path d="M4 1v13l3-3 2.5 5.5 2-1L9 10.5h4.5z" fill="#fff" stroke="#000" stroke-width="1.1"/></svg>
<svg x="31" y="197" width="16" height="16" viewBox="0 0 16 16" overflow="visible"><circle cx="6.5" cy="6" r="4.3" fill="#f4f5fb" stroke="#5e6178" stroke-width="1.400"/><path d="M9.5 9.5l5.5 5" stroke="#5e6178" fill="none" stroke-width="2.2"/><path d="M4.5 6h4M6.5 4v4" stroke="#5e6178" fill="none" stroke-width="1.2"/><path d="M2 13v2.5h5V13" stroke="#5e6178" fill="none" stroke-width="1.1"/></svg>
<svg x="31" y="220" width="16" height="16" viewBox="0 0 16 16" overflow="visible"><circle cx="6.5" cy="6" r="4.3" fill="#f4f5fb" stroke="#5e6178" stroke-width="1.400"/><path d="M9.5 9.5l5.5 5" stroke="#5e6178" fill="none" stroke-width="2.2"/><path d="M4.5 6h4" stroke="#5e6178" fill="none" stroke-width="1.2"/><path d="M2 13v2.5h7V13M4.300 14.500v1M6.700 14.500v1" stroke="#5e6178" fill="none" stroke-width="1.1"/></svg>
<svg x="31" y="243" width="16" height="16" viewBox="0 0 16 16" overflow="visible"><path d="M8 2v12M2.5 8h11" stroke="#5e6178" fill="none" stroke-width="1.3"/><rect x="6.5" y="6.5" width="3" height="3" fill="none" stroke="#5e6178" stroke-width="1"/></svg>
<svg x="31" y="266" width="16" height="16" viewBox="0 0 16 16" overflow="visible"><circle cx="8" cy="8" r="5" fill="none" stroke="#000" stroke-width="1.3"/><path d="M8 0v5M8 11v5M0 8h5M11 8h5" stroke="#000" fill="none" stroke-width="1.2"/><circle cx="8" cy="8" r="1" fill="#000"/></svg>
<path d="M50.7 272.6h5.6l-2.8 2.8z" fill="#000"/>
<svg x="31" y="289" width="16" height="16" viewBox="0 0 16 16" overflow="visible"><path d="M8 1.500v4M8 15.500v-2" stroke="#5e6178" fill="none" stroke-width="1.4"/><path d="M4.800 4.500h6.400L8 8.300zM4.800 12.800h6.400L8 9z" fill="#5e6178"/></svg>
<svg x="31" y="312" width="16" height="16" viewBox="0 0 16 16" overflow="visible"><path d="M4 .5v4.500M1.500 3.500h5" stroke="#5e6178" fill="none" stroke-width="1.3"/><path d="M1.800 4h4.400L4 7z" fill="#5e6178"/><ellipse cx="8.500" cy="11.700" rx="7" ry="3.300" fill="#a9acba" stroke="#6d7084" stroke-width="1" stroke-dasharray="2 1"/></svg>
<path d="M50.7 318.6h5.6l-2.8 2.8z" fill="#000"/>
<svg x="31" y="335" width="16" height="16" viewBox="0 0 16 16" overflow="visible"><path d="M4 0v5" stroke="#000" fill="none" stroke-width="1.4"/><path d="M1.5 4h5L4 7z" fill="#000"/><path d="M1 14L15 5" stroke="#0000ff" fill="none" stroke-width="1.2"/><path d="M8 8h5M8 8v7M10 11h2M8 15h5" stroke="#7b7e90" fill="none" stroke-width="1.3" stroke-dasharray="2 1"/></svg>
<path d="M50.7 341.6h5.6l-2.8 2.8z" fill="#000"/>
<svg x="31" y="358" width="16" height="16" viewBox="0 0 16 16" overflow="visible"><rect x="6" y="2" width="1.8" height="1.8" fill="#7b7e90"/><rect x="10" y="3" width="1.8" height="1.8" fill="#7b7e90"/><rect x="3" y="6" width="1.8" height="1.8" fill="#7b7e90"/><rect x="12" y="7" width="1.8" height="1.8" fill="#7b7e90"/><rect x="5" y="11" width="1.8" height="1.8" fill="#7b7e90"/><rect x="9" y="12" width="1.8" height="1.8" fill="#7b7e90"/></svg>
<svg x="31" y="381" width="16" height="16" viewBox="0 0 16 16" overflow="visible"><text x="1" y="15" font-size="19" font-weight="bold" style='font-family:"Liberation Serif",serif'>T</text></svg>
<svg x="31" y="404" width="16" height="16" viewBox="0 0 16 16" overflow="visible"><rect x="1" y="4" width="11" height="11" fill="#fff" stroke="#000" stroke-width="1.4"/><path d="M6.5 4v11M1 9.5h11" stroke="#000" fill="none" stroke-width="1.2"/><rect x="3" y="6" width="2" height="2" fill="#000" stroke="none" stroke-width="1" shape-rendering="crispEdges"/><rect x="8" y="6" width="2" height="2" fill="#000" stroke="none" stroke-width="1" shape-rendering="crispEdges"/><rect x="3" y="11" width="2" height="2" fill="#000" stroke="none" stroke-width="1" shape-rendering="crispEdges"/><rect x="8" y="11" width="2" height="2" fill="#000" stroke="none" stroke-width="1" shape-rendering="crispEdges"/><text x="11" y="6" font-size="8" font-weight="bold" fill="#f00">A</text></svg>
<path d="M50.7 410.6h5.6l-2.8 2.8z" fill="#000"/>
<svg x="31" y="427" width="16" height="16" viewBox="0 0 16 16" overflow="visible"><path d="M1.5 14.500L12 4" stroke="#000" fill="none" stroke-width="1.5"/><path d="M14.5 1.5v6.500l-2.300-1.900-2.300-2.300-1.900-2.300z" fill="#000"/></svg>
<path d="M50.7 433.6h5.6l-2.8 2.8z" fill="#000"/>
<svg x="31" y="450" width="16" height="16" viewBox="0 0 16 16" overflow="visible"><path d="M1 15L15 1.5" stroke="#000" fill="none" stroke-width="1.4"/></svg>
<path d="M50.7 456.6h5.6l-2.8 2.8z" fill="#000"/>
<svg x="31" y="473" width="16" height="16" viewBox="0 0 16 16" overflow="visible"><rect x="1.5" y="3.5" width="13" height="9.5" fill="#a0a0a0" stroke="#444" stroke-width="1.2"/></svg>
<path d="M50.7 479.6h5.6l-2.8 2.8z" fill="#000"/>
<svg x="31" y="496" width="16" height="16" viewBox="0 0 16 16" overflow="visible"><text x="5.5" y="8" font-size="11" fill="#555a70">*</text><path d="M1 15V8.5h14V15" stroke="#7b7e90" fill="none" stroke-width="1.3"/></svg>
<path d="M50.7 502.6h5.6l-2.8 2.8z" fill="#000"/>
<svg x="31" y="519" width="16" height="16" viewBox="0 0 16 16" overflow="visible"><path d="M4.5 9.5V4.2a1 1 0 0 1 2 0V2.8a1 1 0 0 1 2 0v.5a1 1 0 0 1 2 0v1a1 1 0 0 1 2 0V11c0 3-1.5 4.5-4 4.5H7c-1.5 0-2.5-1-3.5-2.5L1.5 9.5c-.5-1 1-2 2-.8z" fill="#fff" stroke="#000" stroke-width="1.1"/><path d="M6.5 4.5v4M8.5 3.5v5M10.5 4.5v4" stroke="#000" fill="none" stroke-width="0.8"/></svg>
<svg x="31" y="542" width="16" height="16" viewBox="0 0 16 16" overflow="visible"><text x="5" y="15" font-size="15" font-weight="bold" fill="#0000e8">a</text><path d="M0 9l1.5-1 2.5 6 2.5-12H15" stroke="#0000e8" fill="none" stroke-width="1.7"/></svg>
<path d="M50.7 548.6h5.6l-2.8 2.8z" fill="#000"/>
<svg x="31" y="565" width="16" height="16" viewBox="0 0 16 16" overflow="visible"><path d="M1 .8h9.5l3.5 3.5V15.2H1z" stroke="#000" fill="#fff" stroke-width="1.4"/><path d="M3 3v10h9.5" stroke="#000" fill="none" stroke-width="1" stroke-dasharray="1.2 1"/><path d="M3.5 9c1.5-4 2.5-3 3.5-1s2.500 2 4.5-3" stroke="#ff0000" fill="none" stroke-width="1.3"/></svg>
<path d="M50.7 571.6h5.6l-2.8 2.8z" fill="#000"/>
<svg x="31" y="588" width="16" height="16" viewBox="0 0 16 16" overflow="visible"><g transform="scale(.8)"><path d="M4.5 9.5V4.2a1 1 0 0 1 2 0V2.8a1 1 0 0 1 2 0v.5a1 1 0 0 1 2 0v1a1 1 0 0 1 2 0V11c0 3-1.5 4.5-4 4.5H7c-1.5 0-2.5-1-3.5-2.5L1.5 9.5c-.5-1 1-2 2-.8z" fill="#fff" stroke="#000" stroke-width="1.1"/><path d="M6.5 4.5v4M8.5 3.5v5M10.5 4.5v4" stroke="#000" fill="none" stroke-width="0.8"/></g><path d="M13.5 1v15M2 13.5h14M11 4.5h4M11 8h4" stroke="#000" fill="none" stroke-width="1.1"/><path d="M5 13.5v2.5" stroke="#000" fill="none" stroke-width="1"/></svg>
<svg x="31" y="611" width="16" height="16" viewBox="0 0 16 16" overflow="visible"><path d="M5 4l4-3h6v11l-4 3.5H5z" fill="#e80010" stroke="#000" stroke-width="1.100"/><path d="M5 4h6v11.5H5z" fill="#ff1020" stroke="#000" stroke-width="1"/><path d="M11 4l4-3" stroke="#000" fill="none" stroke-width="1"/><path d="M8 9.5H2.5" stroke="#0000ff" fill="none" stroke-width="2.2"/><path d="M7 6l4 3.5L7 13z" fill="#0000ff"/><path d="M4 7c-3 .5-3 4.5 0 5" stroke="#0000ff" fill="none" stroke-width="1.6"/></svg>
<rect x="33.0" y="650.5" width="2" height="2" fill="#fff"/><rect x="32.0" y="649.5" width="2" height="2" fill="#8e8e9a"/>
<rect x="37.2" y="650.5" width="2" height="2" fill="#fff"/><rect x="36.2" y="649.5" width="2" height="2" fill="#8e8e9a"/>
<rect x="41.4" y="650.5" width="2" height="2" fill="#fff"/><rect x="40.4" y="649.5" width="2" height="2" fill="#8e8e9a"/>
<rect x="45.6" y="650.5" width="2" height="2" fill="#fff"/><rect x="44.6" y="649.5" width="2" height="2" fill="#8e8e9a"/>
<svg x="32" y="657" width="16" height="16" viewBox="0 0 16 16" overflow="visible"><rect x="1" y="1" width="14" height="3" fill="#e01010" stroke="none" stroke-width="1" shape-rendering="crispEdges"/><rect x="1" y="4.5" width="14" height="3" fill="#ffe000" stroke="none" stroke-width="1" shape-rendering="crispEdges"/><rect x="1" y="8" width="14" height="3" fill="#1020e0" stroke="none" stroke-width="1" shape-rendering="crispEdges"/><rect x="1" y="11.5" width="14" height="2.5" fill="#10a010" stroke="none" stroke-width="1" shape-rendering="crispEdges"/></svg>
<svg x="32" y="680" width="16" height="16" viewBox="0 0 16 16" overflow="visible"><circle cx="8" cy="7.5" r="6.5" fill="none" stroke="#7b7e90" stroke-width="1.1"/><circle cx="8" cy="8.5" r="3.6" fill="none" stroke="#7b7e90" stroke-width="1.1"/><path d="M6 12v3.5h4V12" stroke="#7b7e90" fill="none" stroke-width="1.1"/></svg>
<svg x="32" y="703" width="16" height="16" viewBox="0 0 16 16" overflow="visible"><path d="M8 1v4M8 11v4M4.5 1h7M4.5 15h7" stroke="#7b7e90" fill="none" stroke-width="1.2"/><rect x="2.5" y="5" width="11" height="6" fill="#fff" stroke="#7b7e90" stroke-width="1.2"/><path d="M2.500 8h11" stroke="#7b7e90" fill="none" stroke-width="1"/></svg>
<svg x="32" y="726" width="16" height="16" viewBox="0 0 16 16" overflow="visible"><path d="M1.5 0v16M14.5 0v16" stroke="#000" fill="none" stroke-width="1.2"/><path d="M3.5 4.5h4" stroke="#000" fill="none" stroke-width="1.3"/><text x="8.5" y="7" font-size="7" font-weight="bold">B</text><text x="8.5" y="14" font-size="7" font-weight="bold">C</text><path d="M3 11.5h5" stroke="#0000ff" fill="none" stroke-width="1.3"/><circle cx="5.500" cy="11.5" r="1.4" fill="#0000ff"/></svg>
<path d="M32.0 766h5l-2.500 2.500zM32.0 769.5h5l-2.500 2.500z" fill="#000"/>
<path d="M43.5 766v6" stroke="#000" stroke-width="1.1"/><path d="M45.5 765.8v6.400l3.500-3.200z" fill="#000"/>
<rect x="33.0" y="781.5" width="2" height="2" fill="#fff"/><rect x="32.0" y="780.5" width="2" height="2" fill="#8e8e9a"/>
<rect x="37.2" y="781.5" width="2" height="2" fill="#fff"/><rect x="36.2" y="780.5" width="2" height="2" fill="#8e8e9a"/>
<rect x="41.4" y="781.5" width="2" height="2" fill="#fff"/><rect x="40.4" y="780.5" width="2" height="2" fill="#8e8e9a"/>
<rect x="45.6" y="781.5" width="2" height="2" fill="#fff"/><rect x="44.6" y="780.5" width="2" height="2" fill="#8e8e9a"/>
<path d="M32.0 805.5h5l-2.500 2.500zM32.0 809.0h5l-2.500 2.500z" fill="#000"/>
<path d="M43.5 805.5v6" stroke="#000" stroke-width="1.1"/><path d="M45.5 805.3v6.400l3.500-3.200z" fill="#000"/>
<g><rect x="4.500" y="803.500" width="32" height="34" fill="#d4e4f7" stroke="#3a8ee0" stroke-width="1"/><rect x="14" y="799" width="9" height="6" rx="1.500" fill="#3a8ee0"/><circle cx="20" cy="820" r="8.500" fill="none" stroke="#e85048" stroke-width="1.800"/><path d="M20 814.500v6l4 3" fill="none" stroke="#e85048" stroke-width="1.800"/><path d="M9.500 817l2 4 3.500-3" fill="none" stroke="#e85048" stroke-width="1.600"/><circle cx="35" cy="830" r="7" fill="#1a6fe0"/><circle cx="34" cy="829" r="3" fill="none" stroke="#fff" stroke-width="1.600"/><path d="M36.500 831.500l3 3" stroke="#fff" stroke-width="1.800"/></g>
<rect x="915.0" y="166.5" width="2" height="2" fill="#fff"/><rect x="914.0" y="165.5" width="2" height="2" fill="#8e8e9a"/>
<rect x="919.2" y="166.5" width="2" height="2" fill="#fff"/><rect x="918.2" y="165.5" width="2" height="2" fill="#8e8e9a"/>
<rect x="923.4" y="166.5" width="2" height="2" fill="#fff"/><rect x="922.4" y="165.5" width="2" height="2" fill="#8e8e9a"/>
<rect x="927.6" y="166.5" width="2" height="2" fill="#fff"/><rect x="926.6" y="165.5" width="2" height="2" fill="#8e8e9a"/>
<path d="M926.5 560v6" stroke="#000" stroke-width="1.1"/><path d="M928.5 559.8v6.400l3.500-3.200z" fill="#000"/>
<svg x="915" y="174" width="16" height="16" viewBox="0 0 16 16" overflow="visible"><rect x="11.2" y="1" width="4.8" height="2.600" fill="#5a5c6e"/><rect x="5.3" y="4.2" width="5.3" height="2.600" fill="#5a5c6e"/><rect x="0.3" y="7.2" width="4.7" height="2.600" fill="#5a5c6e"/><rect x="11.2" y="7.6" width="4.8" height="2.600" fill="#5a5c6e"/><rect x="7.5" y="7.4" width="3.5" height="2.600" fill="#b4b6c4"/><rect x="5.3" y="10.8" width="5.3" height="2.600" fill="#5a5c6e"/><rect x="2.4" y="10.8" width="2.9" height="2.600" fill="#b4b6c4"/><rect x="10.6" y="10.8" width="3" height="2.600" fill="#b4b6c4"/><rect x="0.3" y="13.8" width="4.7" height="2.600" fill="#5a5c6e"/><rect x="5" y="13.8" width="2.6" height="2.600" fill="#b4b6c4"/></svg>
<svg x="915" y="196.5" width="16" height="16" viewBox="0 0 16 16" overflow="visible"><path d="M3.500 1.5V13.500" stroke="#ff0000" fill="none" stroke-width="1.15"/><path d="M3.500 13.500h11" stroke="#ff0000" fill="none" stroke-width="1.15"/><path d="M1 4.500L3.500 .5l2.500 4z" fill="#f00"/><path d="M12.500 11l4 2.500-4 2.500z" fill="#f00"/><path d="M3.500 13.500L12.500 4" stroke="#ff0000" fill="none" stroke-width="1.15"/><path d="M14.5 1.500l-4.500 1 3.500 3.500z" fill="#f00"/></svg>
<svg x="915" y="219" width="16" height="16" viewBox="0 0 16 16" overflow="visible"><path d="M3.500 1.5V13.500" stroke="#000" fill="none" stroke-width="1.15"/><path d="M3.500 13.500h11" stroke="#ff0000" fill="none" stroke-width="1.15"/><path d="M12.500 11l4 2.500-4 2.500z" fill="#f00"/><path d="M3.500 13.500L12.500 4" stroke="#000" fill="none" stroke-width="1.15"/></svg>
<svg x="915" y="242" width="16" height="16" viewBox="0 0 16 16" overflow="visible"><path d="M3.500 1.5V13.500" stroke="#ff0000" fill="none" stroke-width="1.15"/><path d="M3.500 13.500h11" stroke="#000" fill="none" stroke-width="1.15"/><path d="M1 4.500L3.500 .5l2.500 4z" fill="#f00"/><path d="M3.500 13.500L12.500 4" stroke="#000" fill="none" stroke-width="1.15"/></svg>
<svg x="915" y="266" width="16" height="16" viewBox="0 0 16 16" overflow="visible"><text x="0" y="11.5" font-size="10" fill="#7b7e90" font-weight="bold" textLength="16">XY</text><path d="M3 4c2-3.500 7-3.500 9 0M13 12c-2 3.500-7 3.500-9 0" stroke="#aeb0c0" fill="none" stroke-width="1.3"/><path d="M11 1.500l2.500 3.500-4 .5zM5 14.500l-2.500-3.500 4-.5z" fill="#aeb0c0"/></svg>
<svg x="915" y="289.5" width="16" height="16" viewBox="0 0 16 16" overflow="visible"><path d="M1.5 0v14.500H16" stroke="#000" fill="none" stroke-width="1.2" stroke-dasharray="1.5 1"/><g transform="translate(3.500 0) scale(.78)" fill="#000"><circle cx="10.5" cy="2.5" r="2"/><path d="M4 5l4-1 3.5 1.5L13 9l-1.2.7L10.5 7 9 9.5l2.5 2.5L10 16H8.3l1-3.5-3-2L4.5 13H1v-1.5h2.7L6 8l1-2.5L5 6.2 4 8.5 2.8 8z"/></g></svg>
<svg x="915" y="320" width="16" height="16" viewBox="0 0 16 16" overflow="visible"><rect x="0.7" y="0.7" width="14.6" height="14.6" fill="none" stroke="#000" stroke-width="1.4"/><path d="M2.700 2v3.500h10.800M2.700 10v3.200h4M9.200 10v3.200h4.300" stroke="#000" fill="none" stroke-width="1.2"/></svg>
<svg x="915" y="343" width="16" height="16" viewBox="0 0 16 16" overflow="visible"><rect x="0.7" y="0.7" width="14.6" height="5.8" fill="none" stroke="#000" stroke-width="1.3"/><path d="M3.700 2v2.500h3M9.200 2v2.500h3.300" stroke="#000" fill="none" stroke-width="1.1"/><rect x="0.7" y="9.5" width="5.8" height="5.8" fill="none" stroke="#000" stroke-width="1.3"/><rect x="9.5" y="9.5" width="5.8" height="5.8" fill="none" stroke="#000" stroke-width="1.3"/><path d="M2.700 11v2.500h2.300M11.500 11v2.500h2.300" stroke="#000" fill="none" stroke-width="1.1"/></svg>
<svg x="915" y="365.5" width="16" height="16" viewBox="0 0 16 16" overflow="visible"><rect x="0.7" y="0.7" width="5.8" height="5.8" fill="none" stroke="#000" stroke-width="1.3"/><rect x="9.5" y="0.7" width="5.8" height="5.8" fill="none" stroke="#000" stroke-width="1.3"/><path d="M2.700 2.200v2.500h2.300M11.500 2.200v2.500h2.300" stroke="#000" fill="none" stroke-width="1.1"/><rect x="0.7" y="9.5" width="14.6" height="5.8" fill="none" stroke="#000" stroke-width="1.3"/><path d="M3.700 11v2.500h3M9.200 11v2.500h3.300" stroke="#000" fill="none" stroke-width="1.1"/></svg>
<svg x="915" y="388.5" width="16" height="16" viewBox="0 0 16 16" overflow="visible"><path d="M.7 .7h14.600" stroke="#0000ff" fill="none" stroke-width="1.4"/><path d="M.7 1v4.700h14.600V1" stroke="#000" fill="none" stroke-width="1.2"/><path d="M1.500 3c2-1.500 3.500 2 6 .500s3.500 1 6.500-1.200" stroke="#ff0000" fill="none" stroke-width="1.2"/><path d="M.7 7.700h11" stroke="#0000ff" fill="none" stroke-width="1.3"/><path d="M.7 8v4.500h3M11.700 8v2" stroke="#000" fill="none" stroke-width="1.2"/><path d="M3.500 10h12" stroke="#0000ff" fill="none" stroke-width="1.3"/><rect x="3.5" y="10.2" width="11.8" height="5" fill="none" stroke="#000" stroke-width="1.2"/><path d="M6 11.500h6l-3 3z" fill="#c8cad6" stroke="#000" stroke-width=".8"/></svg>
<svg x="915" y="419" width="16" height="16" viewBox="0 0 16 16" overflow="visible"><path d="M2 1v13h13" stroke="#000" fill="none" stroke-width="1.4"/><path d="M2 14h13" stroke="#000" fill="none" stroke-width="1" stroke-dasharray="1 1.500" transform="translate(0 -1.500)"/></svg>
<svg x="915" y="442" width="16" height="16" viewBox="0 0 16 16" overflow="visible"><path d="M2 14V2h13v12" stroke="#7b7e90" fill="none" stroke-width="1.1" stroke-dasharray="1.2 1.2"/><path d="M2 2h13" stroke="#000" fill="none" stroke-width="1.5"/></svg>
<svg x="915" y="465" width="16" height="16" viewBox="0 0 16 16" overflow="visible"><path d="M2 2v12h13V2" stroke="#7b7e90" fill="none" stroke-width="1.1" stroke-dasharray="1.2 1.2"/><path d="M15 2v12" stroke="#000" fill="none" stroke-width="1.5"/></svg>
<svg x="915" y="488" width="16" height="16" viewBox="0 0 16 16" overflow="visible"><path d="M2 2h13v12H2z" stroke="#7b7e90" fill="none" stroke-width="1.1" stroke-dasharray="1.2 1.2"/><path d="M2 2v12h13V2z" stroke="#000" fill="none" stroke-width="1.1" stroke-dasharray="1 2"/></svg>
<svg x="915" y="511" width="16" height="16" viewBox="0 0 16 16" overflow="visible"><path d="M2 1v13h13" stroke="#7b7e90" fill="none" stroke-width="1.1" stroke-dasharray="1.2 1.2"/><path d="M6 3v4h5.500" stroke="#000" fill="none" stroke-width="1.5"/></svg>
<svg x="915" y="534" width="16" height="16" viewBox="0 0 16 16" overflow="visible"><path d="M2 1v13h13" stroke="#7b7e90" fill="none" stroke-width="1.1" stroke-dasharray="1.2 1.2"/><path d="M6 3v4h5.500" stroke="#000" fill="none" stroke-width="1.3"/><path d="M8 3l3.500 2" stroke="#ff0000" fill="none" stroke-width="1.5"/></svg>
<path d="M914 313.5h19" stroke="#c9c6c0" stroke-width="1.200"/><path d="M914 314.5h19" stroke="#f8f8fd" stroke-width=".8"/>
<path d="M914 412.5h19" stroke="#c9c6c0" stroke-width="1.200"/><path d="M914 413.5h19" stroke="#f8f8fd" stroke-width=".8"/>
<rect x="915.0" y="574.0" width="2" height="2" fill="#fff"/><rect x="914.0" y="573.0" width="2" height="2" fill="#8e8e9a"/>
<rect x="919.2" y="574.0" width="2" height="2" fill="#fff"/><rect x="918.2" y="573.0" width="2" height="2" fill="#8e8e9a"/>
<rect x="923.4" y="574.0" width="2" height="2" fill="#fff"/><rect x="922.4" y="573.0" width="2" height="2" fill="#8e8e9a"/>
<rect x="927.6" y="574.0" width="2" height="2" fill="#fff"/><rect x="926.6" y="573.0" width="2" height="2" fill="#8e8e9a"/>
<rect x="931.8" y="574.0" width="2" height="2" fill="#fff"/><rect x="930.8" y="573.0" width="2" height="2" fill="#8e8e9a"/>
<rect x="936.0" y="574.0" width="2" height="2" fill="#fff"/><rect x="935.0" y="573.0" width="2" height="2" fill="#8e8e9a"/>
<svg x="915" y="581" width="16" height="16" viewBox="0 0 16 16" overflow="visible"><rect x="3" y="1.5" width="7" height="5" fill="#f4f5fb" stroke="#5e6178" stroke-width="1.1"/><rect x="3" y="9" width="11" height="5.5" fill="#f4f5fb" stroke="#5e6178" stroke-width="1.1"/><path d="M1.500 0v16" stroke="#5e6178" fill="none" stroke-width="1" stroke-dasharray="1.500 1.200"/></svg>
<svg x="915" y="604" width="16" height="16" viewBox="0 0 16 16" overflow="visible"><rect x="6" y="1.5" width="6" height="5" fill="#f4f5fb" stroke="#5e6178" stroke-width="1.1"/><rect x="2" y="9" width="10" height="5.5" fill="#f4f5fb" stroke="#5e6178" stroke-width="1.1"/><path d="M14 0v16" stroke="#5e6178" fill="none" stroke-width="1" stroke-dasharray="1.500 1.200"/></svg>
<svg x="915" y="634.5" width="16" height="16" viewBox="0 0 16 16" overflow="visible"><rect x="2" y="3" width="5" height="11" fill="#f4f5fb" stroke="#5e6178" stroke-width="1.1"/><rect x="9.5" y="3" width="5" height="6" fill="#f4f5fb" stroke="#5e6178" stroke-width="1.1"/><path d="M0 1.500h16" stroke="#5e6178" fill="none" stroke-width="1" stroke-dasharray="1.500 1.200"/></svg>
<svg x="915" y="656.5" width="16" height="16" viewBox="0 0 16 16" overflow="visible"><rect x="2" y="2" width="5" height="11" fill="#f4f5fb" stroke="#5e6178" stroke-width="1.1"/><rect x="9.5" y="6" width="5" height="7" fill="#f4f5fb" stroke="#5e6178" stroke-width="1.1"/><path d="M0 14.500h16" stroke="#5e6178" fill="none" stroke-width="1" stroke-dasharray="1.500 1.200"/></svg>
<svg x="915" y="689" width="16" height="16" viewBox="0 0 16 16" overflow="visible"><rect x="5" y="1.5" width="6" height="5" fill="#f4f5fb" stroke="#5e6178" stroke-width="1.1"/><rect x="2" y="9" width="12" height="5.5" fill="#f4f5fb" stroke="#5e6178" stroke-width="1.1"/><path d="" stroke="#5e6178" fill="none" stroke-width="1" stroke-dasharray="1.500 1.200"/><path d="M8 0v16" stroke="#5e6178" fill="none" stroke-width="1.1"/></svg>
<svg x="915" y="712" width="16" height="16" viewBox="0 0 16 16" overflow="visible"><rect x="1.5" y="5" width="5" height="6" fill="#f4f5fb" stroke="#5e6178" stroke-width="1.1"/><rect x="9" y="2" width="5.5" height="12" fill="#f4f5fb" stroke="#5e6178" stroke-width="1.1"/><path d="" stroke="#5e6178" fill="none" stroke-width="1" stroke-dasharray="1.500 1.200"/><path d="M0 8h16" stroke="#5e6178" fill="none" stroke-width="1.1"/></svg>
<svg x="915" y="743" width="16" height="16" viewBox="0 0 16 16" overflow="visible"><path d="M3 1.500h10v4H3zM3 9.500h10v5H3z" stroke="#5e6178" fill="#f4f5fb" stroke-width="1.1" stroke-dasharray="2 1.200"/><path d="M1 0v16" stroke="#5e6178" fill="none" stroke-width="1" stroke-dasharray="1.500 1.200"/></svg>
<svg x="915" y="765.5" width="16" height="16" viewBox="0 0 16 16" overflow="visible"><path d="M2 3h4.500v10H2zM9.500 3H14v10H9.500z" stroke="#5e6178" fill="#f4f5fb" stroke-width="1.1" stroke-dasharray="2 1.200"/><path d="M0 1h16" stroke="#5e6178" fill="none" stroke-width="1" stroke-dasharray="1.500 1.200"/></svg>
<path d="M914 628h19" stroke="#c9c6c0" stroke-width="1.200"/><path d="M914 629h19" stroke="#f8f8fd" stroke-width=".8"/>
<path d="M914 682.5h19" stroke="#c9c6c0" stroke-width="1.200"/><path d="M914 683.5h19" stroke="#f8f8fd" stroke-width=".8"/>
<path d="M914 736.5h19" stroke="#c9c6c0" stroke-width="1.200"/><path d="M914 737.5h19" stroke="#f8f8fd" stroke-width=".8"/>
<path d="M915.0 805h5l-2.500 2.500zM915.0 808.5h5l-2.500 2.500z" fill="#000"/>
<path d="M935.5 805v6" stroke="#000" stroke-width="1.1"/><path d="M937.5 804.8v6.400l3.500-3.200z" fill="#000"/>
<rect x="67.5" y="788" width="2" height="2" fill="#fff"/><rect x="66.5" y="787" width="2" height="2" fill="#8e8e9a"/>
<rect x="67.5" y="792" width="2" height="2" fill="#fff"/><rect x="66.5" y="791" width="2" height="2" fill="#8e8e9a"/>
<rect x="67.5" y="796" width="2" height="2" fill="#fff"/><rect x="66.5" y="795" width="2" height="2" fill="#8e8e9a"/>
<rect x="67.5" y="800" width="2" height="2" fill="#fff"/><rect x="66.5" y="799" width="2" height="2" fill="#8e8e9a"/>
<rect x="67.5" y="804" width="2" height="2" fill="#fff"/><rect x="66.5" y="803" width="2" height="2" fill="#8e8e9a"/>
<path d="M379 802.5h6" stroke="#000" stroke-width="1.2"/><path d="M378.8 804.5h6.4l-3.2 3.6z" fill="#000"/>
<rect x="391.5" y="788" width="2" height="2" fill="#fff"/><rect x="390.5" y="787" width="2" height="2" fill="#8e8e9a"/>
<rect x="391.5" y="792" width="2" height="2" fill="#fff"/><rect x="390.5" y="791" width="2" height="2" fill="#8e8e9a"/>
<rect x="391.5" y="796" width="2" height="2" fill="#fff"/><rect x="390.5" y="795" width="2" height="2" fill="#8e8e9a"/>
<rect x="391.5" y="800" width="2" height="2" fill="#fff"/><rect x="390.5" y="799" width="2" height="2" fill="#8e8e9a"/>
<rect x="391.5" y="804" width="2" height="2" fill="#fff"/><rect x="390.5" y="803" width="2" height="2" fill="#8e8e9a"/>
<path d="M586.5 802.5h6" stroke="#000" stroke-width="1.2"/><path d="M586.3 804.5h6.4l-3.2 3.6z" fill="#000"/>
<rect x="599.5" y="788" width="2" height="2" fill="#fff"/><rect x="598.5" y="787" width="2" height="2" fill="#8e8e9a"/>
<rect x="599.5" y="792" width="2" height="2" fill="#fff"/><rect x="598.5" y="791" width="2" height="2" fill="#8e8e9a"/>
<rect x="599.5" y="796" width="2" height="2" fill="#fff"/><rect x="598.5" y="795" width="2" height="2" fill="#8e8e9a"/>
<rect x="599.5" y="800" width="2" height="2" fill="#fff"/><rect x="598.5" y="799" width="2" height="2" fill="#8e8e9a"/>
<rect x="599.5" y="804" width="2" height="2" fill="#fff"/><rect x="598.5" y="803" width="2" height="2" fill="#8e8e9a"/>
<path d="M757 802.5h6" stroke="#000" stroke-width="1.2"/><path d="M756.8 804.5h6.4l-3.2 3.6z" fill="#000"/>
<rect x="770.5" y="788" width="2" height="2" fill="#fff"/><rect x="769.5" y="787" width="2" height="2" fill="#8e8e9a"/>
<rect x="770.5" y="792" width="2" height="2" fill="#fff"/><rect x="769.5" y="791" width="2" height="2" fill="#8e8e9a"/>
<rect x="770.5" y="796" width="2" height="2" fill="#fff"/><rect x="769.5" y="795" width="2" height="2" fill="#8e8e9a"/>
<rect x="770.5" y="800" width="2" height="2" fill="#fff"/><rect x="769.5" y="799" width="2" height="2" fill="#8e8e9a"/>
<rect x="770.5" y="804" width="2" height="2" fill="#fff"/><rect x="769.5" y="803" width="2" height="2" fill="#8e8e9a"/>
<path d="M901 802.5h6" stroke="#000" stroke-width="1.2"/><path d="M900.8 804.5h6.4l-3.2 3.6z" fill="#000"/>
<path d="M900.5 786l2.2 2.2-2.2 2.2zM904.3 786l2.2 2.2-2.2 2.2z" fill="#000"/>
<svg x="75" y="788" width="16" height="16" viewBox="0 0 16 16" overflow="visible"><path d="M1 15L15 1" stroke="#5e6178" fill="none" stroke-width="1.2"/></svg>
<path d="M94.8 795.15h5.4l-2.7 2.7z" fill="#000"/>
<svg x="106.5" y="788" width="16" height="16" viewBox="0 0 16 16" overflow="visible"><rect x="1" y="11" width="3" height="3" fill="#5e6178" stroke="none" stroke-width="1" shape-rendering="crispEdges"/><rect x="6" y="6" width="3" height="3" fill="#5e6178" stroke="none" stroke-width="1" shape-rendering="crispEdges"/><rect x="11" y="2" width="3" height="3" fill="#5e6178" stroke="none" stroke-width="1" shape-rendering="crispEdges"/></svg>
<path d="M125.3 795.15h5.4l-2.7 2.7z" fill="#000"/>
<svg x="138" y="788" width="16" height="16" viewBox="0 0 16 16" overflow="visible"><path d="M2.500 13.500L13.500 2.500" stroke="#5e6178" fill="none" stroke-width="1.3"/><rect x="1" y="11.5" width="3" height="3" fill="#5e6178" stroke="none" stroke-width="1" shape-rendering="crispEdges"/><rect x="6.5" y="6.5" width="3" height="3" fill="#5e6178" stroke="none" stroke-width="1" shape-rendering="crispEdges"/><rect x="12" y="1" width="3" height="3" fill="#5e6178" stroke="none" stroke-width="1" shape-rendering="crispEdges"/></svg>
<path d="M156.8 795.15h5.4l-2.7 2.7z" fill="#000"/>
<svg x="167" y="788" width="16" height="16" viewBox="0 0 16 16" overflow="visible"><rect x="1" y="6" width="4" height="10" fill="#a6a9b8" stroke="#5e6178" stroke-width="1.1"/><rect x="5.5" y="1" width="4" height="15" fill="#a6a9b8" stroke="#5e6178" stroke-width="1.1"/><rect x="10" y="4" width="4" height="12" fill="#a6a9b8" stroke="#5e6178" stroke-width="1.1"/></svg>
<path d="M187.3 795.15h5.4l-2.7 2.7z" fill="#000"/>
<svg x="199" y="788" width="16" height="16" viewBox="0 0 16 16" overflow="visible"><rect x="1" y="1" width="14.5" height="14.5" fill="#fff" stroke="#5e6178" stroke-width="1.2"/><path d="M1 15.500L15.500 1M1 1l14.500 14.500" stroke="#5e6178" fill="none" stroke-width="1"/><path d="M10 2.500l4 4M10 6.500l4-4" stroke="#5e6178" fill="none" stroke-width="0.8"/></svg>
<path d="M218.8 795.15h5.4l-2.7 2.7z" fill="#000"/>
<svg x="231" y="788" width="16" height="16" viewBox="0 0 16 16" overflow="visible"><path d="M8 1v3M8 12v3M5 1h6M5 15h6M3 8h10" stroke="#aeb0c0" fill="none" stroke-width="1.1"/><rect x="4" y="4" width="8" height="8" fill="none" stroke="#aeb0c0" stroke-width="1.2"/></svg>
<path d="M249.3 795.15h5.4l-2.7 2.7z" fill="#000"/>
<svg x="261" y="788" width="16" height="16" viewBox="0 0 16 16" overflow="visible"><path d="M1 15V5l4 5 4-5 3 3 3-4v11z" fill="#8e91a2"/><path d="M1 5l4 5 4-5 3 3 3-4" stroke="#5e6178" fill="none" stroke-width="1.2"/></svg>
<path d="M280.3 795.15h5.4l-2.7 2.7z" fill="#000"/>
<svg x="292" y="788" width="16" height="16" viewBox="0 0 16 16" overflow="visible"><path d="M1.500 0v16" stroke="#5e6178" fill="none" stroke-width="1.2" stroke-dasharray="1.500 1"/><circle cx="9.500" cy="8" r="6" fill="none" stroke="#5e6178" stroke-width="1.2"/><text x="7" y="11.500" font-size="9" fill="#5e6178">r</text></svg>
<path d="M311.3 795.15h5.4l-2.7 2.7z" fill="#000"/>
<svg x="323" y="788" width="16" height="16" viewBox="0 0 16 16" overflow="visible"><path d="M4 0v16M11 2v14" stroke="#5e6178" fill="none" stroke-width="1.1"/><rect x="1.5" y="4" width="5" height="7" fill="#fff" stroke="#5e6178" stroke-width="1.2"/><rect x="9" y="5" width="4" height="7" fill="#a6a9b8" stroke="#5e6178" stroke-width="1.2"/></svg>
<path d="M342.3 795.15h5.4l-2.7 2.7z" fill="#000"/>
<svg x="355" y="788" width="16" height="16" viewBox="0 0 16 16" overflow="visible"><rect x="1" y="3" width="10" height="9" fill="#a6a9b8" stroke="#5e6178" stroke-width="1"/><rect x="5" y="5" width="10" height="9" fill="#c8cad6" stroke="#5e6178" stroke-width="1"/><path d="M7 7v5M9.500 7v5M12 7v5" stroke="#fff" fill="none" stroke-width="1.2"/></svg>
<svg x="398" y="788" width="16" height="16" viewBox="0 0 16 16" overflow="visible"><path d="M1.500 6L6 1h9v9l-4.500 5.500h-9z" stroke="#5e6178" fill="#f4f5fb" stroke-width="1.1"/><path d="M4.500 15V5.500l2-2v9M7.500 13V3l2-1.500v9M10.500 11V4" stroke="#5e6178" fill="#a6a9b8" stroke-width="1"/></svg>
<path d="M418.3 795.15h5.4l-2.7 2.7z" fill="#000"/>
<svg x="437.5" y="788" width="16" height="16" viewBox="0 0 16 16" overflow="visible"><path d="M1 6.500L5.500 2H15v7.500L10.500 14H1z" stroke="#5e6178" fill="#c8cad6" stroke-width="1.2"/><path d="M1 6.500h9.500V14M10.500 6.500L15 2" stroke="#5e6178" fill="none" stroke-width="1.1"/></svg>
<path d="M457.8 795.15h5.4l-2.7 2.7z" fill="#000"/>
<svg x="468.5" y="788" width="16" height="16" viewBox="0 0 16 16" overflow="visible"><path d="M1 6L6 1h9v9l-5 5.500H1z" stroke="#5e6178" fill="#f4f5fb" stroke-width="1.2"/><path d="M1 6h9v9.500M10 6l5-5" stroke="#5e6178" fill="none" stroke-width="1.1"/><circle cx="3.5" cy="8.5" r="1" fill="#5e6178"/><circle cx="7.5" cy="12.5" r="1" fill="#5e6178"/><circle cx="5.5" cy="10.5" r="1" fill="#5e6178"/><circle cx="12.5" cy="5" r="1" fill="#5e6178"/><circle cx="12.5" cy="9.5" r="1" fill="#5e6178"/></svg>
<path d="M488.3 795.15h5.4l-2.7 2.7z" fill="#000"/>
<svg x="500" y="788" width="16" height="16" viewBox="0 0 16 16" overflow="visible"><rect x="1" y="1" width="14.5" height="14" fill="#a6a9b8" stroke="none" stroke-width="1" shape-rendering="crispEdges"/><rect x="3" y="2" width="1.500" height="1.500" fill="#f4f5fb"/><rect x="3" y="5.5" width="1.500" height="1.500" fill="#f4f5fb"/><rect x="3" y="9" width="1.500" height="1.500" fill="#f4f5fb"/><rect x="3" y="12.5" width="1.500" height="1.500" fill="#f4f5fb"/><rect x="6.5" y="2" width="1.500" height="1.500" fill="#f4f5fb"/><rect x="6.5" y="5.5" width="1.500" height="1.500" fill="#f4f5fb"/><rect x="6.5" y="9" width="1.500" height="1.500" fill="#f4f5fb"/><rect x="6.5" y="12.5" width="1.500" height="1.500" fill="#f4f5fb"/><rect x="10" y="2" width="1.500" height="1.500" fill="#f4f5fb"/><rect x="10" y="5.5" width="1.500" height="1.500" fill="#f4f5fb"/><rect x="10" y="9" width="1.500" height="1.500" fill="#f4f5fb"/><rect x="10" y="12.5" width="1.500" height="1.500" fill="#f4f5fb"/><rect x="13" y="2" width="1.500" height="1.500" fill="#f4f5fb"/><rect x="13" y="5.5" width="1.500" height="1.500" fill="#f4f5fb"/><rect x="13" y="9" width="1.500" height="1.500" fill="#f4f5fb"/><rect x="13" y="12.5" width="1.500" height="1.500" fill="#f4f5fb"/></svg>
<path d="M519.3 795.15h5.4l-2.7 2.7z" fill="#000"/>
<svg x="530.5" y="788" width="16" height="16" viewBox="0 0 16 16" overflow="visible"><path d="M1 4c2-4 4-4 5 0s3 3 4.500 0 3-3 4.500 0" stroke="#5e6178" fill="none" stroke-width="1"/><rect x="1" y="6.5" width="14.5" height="9" fill="#a6a9b8" stroke="none" stroke-width="1" shape-rendering="crispEdges"/><rect x="3" y="8" width="2" height="1.500" fill="#f4f5fb"/><rect x="3" y="11.5" width="2" height="1.500" fill="#f4f5fb"/><rect x="7" y="8" width="2" height="1.500" fill="#f4f5fb"/><rect x="7" y="11.5" width="2" height="1.500" fill="#f4f5fb"/><rect x="11" y="8" width="2" height="1.500" fill="#f4f5fb"/><rect x="11" y="11.5" width="2" height="1.500" fill="#f4f5fb"/></svg>
<path d="M550.8 795.15h5.4l-2.7 2.7z" fill="#000"/>
<svg x="562.5" y="788" width="16" height="16" viewBox="0 0 16 16" overflow="visible"><rect x="0.5" y="0.5" width="15.5" height="15" fill="#a6a9b8" stroke="#5e6178" stroke-width="1"/><path d="M6 1c1 6 4 9 9.500 10V1z" fill="#8e91a2"/></svg>
<path d="M432 786v21" stroke="#c9c6c0" stroke-width="1.2"/><path d="M433 786v21" stroke="#f4f4fb" stroke-width=".8"/>
<svg x="607" y="788" width="16" height="16" viewBox="0 0 16 16" overflow="visible"><path d="M1.500 1.500l3 2h7l3-2v8c0 3-3 5.500-6.500 5.500S1.500 12.500 1.500 9.500z" fill="#e8eaf4" stroke="#7b7e90" stroke-width="1.1"/><path d="M4.500 6.500h2M9.500 6.500h2" stroke="#7b7e90" fill="none" stroke-width="1.4"/><path d="M5 10.500h6l-3 3z" fill="#7b7e90"/><path d="M0 13v3M0 16h16M16 13v3" stroke="#7b7e90" fill="none" stroke-width="1" stroke-dasharray="2 1.500"/></svg>
<svg x="629" y="788" width="16" height="16" viewBox="0 0 16 16" overflow="visible"><path d="M1.500 1.500l3 2h7l3-2v8c0 3-3 5.500-6.500 5.500S1.500 12.500 1.500 9.500z" fill="#c8cad6" stroke="#7b7e90" stroke-width="1.1"/><path d="M4.500 6.500h2M9.500 6.500h2" stroke="#7b7e90" fill="none" stroke-width="1.4"/><path d="M5 10.500h6l-3 3z" fill="#7b7e90"/><path d="M2 2l12 12M14 2L2 14" stroke="#f4f5fb" fill="none" stroke-width="1.2"/><path d="M0 16h16" stroke="#7b7e90" fill="none" stroke-width="1.5" stroke-dasharray="3 1.500"/></svg>
<svg x="660" y="788" width="16" height="16" viewBox="0 0 16 16" overflow="visible"><path d="M1.500 1.500h13v8c0 3-3 5.500-6.500 5.500S1.500 12.500 1.500 9.500z" fill="#a6a9b8" stroke="#7b7e90" stroke-width="1.1"/><path d="M4.500 6h2M9.500 6h2" stroke="#5e6178" fill="none" stroke-width="1.4"/><path d="M5 10c1.500 2 4.500 2 6 0" stroke="#5e6178" fill="none" stroke-width="1.2"/></svg>
<svg x="682" y="788" width="16" height="16" viewBox="0 0 16 16" overflow="visible"><rect x="0" y="4" width="2.5" height="2.5" fill="#8e91a2" stroke="none" stroke-width="1" shape-rendering="crispEdges"/><rect x="0" y="9" width="2.5" height="2.5" fill="#8e91a2" stroke="none" stroke-width="1" shape-rendering="crispEdges"/><rect x="3.5" y="4" width="2.5" height="2.5" fill="#8e91a2" stroke="none" stroke-width="1" shape-rendering="crispEdges"/><rect x="3.5" y="9" width="2.5" height="2.5" fill="#8e91a2" stroke="none" stroke-width="1" shape-rendering="crispEdges"/><rect x="7" y="4" width="2.5" height="2.5" fill="#8e91a2" stroke="none" stroke-width="1" shape-rendering="crispEdges"/><rect x="7" y="9" width="2.5" height="2.5" fill="#8e91a2" stroke="none" stroke-width="1" shape-rendering="crispEdges"/><path d="M13 2v12" stroke="#8e91a2" fill="none" stroke-width="1.3"/><path d="M10.500 4L13 0l2.500 4zM10.500 12l2.500 4 2.500-4z" fill="#8e91a2"/></svg>
<svg x="704" y="788" width="16" height="16" viewBox="0 0 16 16" overflow="visible"><rect x="0" y="4" width="2.5" height="2.5" fill="#000" stroke="none" stroke-width="1" shape-rendering="crispEdges"/><rect x="0" y="9" width="2.5" height="2.5" fill="#e00000" stroke="none" stroke-width="1" shape-rendering="crispEdges"/><rect x="3.5" y="4" width="2.5" height="2.5" fill="#e00000" stroke="none" stroke-width="1" shape-rendering="crispEdges"/><rect x="3.5" y="9" width="2.5" height="2.5" fill="#000" stroke="none" stroke-width="1" shape-rendering="crispEdges"/><rect x="7" y="4" width="2.5" height="2.5" fill="#000" stroke="none" stroke-width="1" shape-rendering="crispEdges"/><rect x="7" y="9" width="2.5" height="2.5" fill="#e00000" stroke="none" stroke-width="1" shape-rendering="crispEdges"/><path d="M13 2v12" stroke="#000" fill="none" stroke-width="1.3"/><path d="M10.500 4L13 0l2.500 4zM10.500 12l2.500 4 2.500-4z" fill="#000"/></svg>
<svg x="734" y="788" width="16" height="16" viewBox="0 0 16 16" overflow="visible"><rect x="0" y="4" width="2.5" height="2.5" fill="#000" stroke="none" stroke-width="1" shape-rendering="crispEdges"/><rect x="0" y="9" width="2.5" height="2.5" fill="#e00000" stroke="none" stroke-width="1" shape-rendering="crispEdges"/><rect x="3.5" y="4" width="2.5" height="2.5" fill="#e00000" stroke="none" stroke-width="1" shape-rendering="crispEdges"/><rect x="3.5" y="9" width="2.5" height="2.5" fill="#000" stroke="none" stroke-width="1" shape-rendering="crispEdges"/><rect x="7" y="4" width="2.5" height="2.5" fill="#000" stroke="none" stroke-width="1" shape-rendering="crispEdges"/><rect x="7" y="9" width="2.5" height="2.5" fill="#e00000" stroke="none" stroke-width="1" shape-rendering="crispEdges"/><path d="M13 2v12" stroke="#000" fill="none" stroke-width="1.3"/><path d="M10.500 4L13 0l2.500 4zM10.500 12l2.500 4 2.500-4z" fill="#000"/></svg>
<path d="M653 786v21" stroke="#c9c6c0" stroke-width="1.2"/><path d="M654 786v21" stroke="#f4f4fb" stroke-width=".8"/>
<path d="M727 786v21" stroke="#c9c6c0" stroke-width="1.2"/><path d="M728 786v21" stroke="#f4f4fb" stroke-width=".8"/>
<svg x="779.5" y="788" width="16" height="16" viewBox="0 0 16 16" overflow="visible"><rect x="5" y="1" width="6" height="13" fill="#ee0010" stroke="#600" stroke-width="0.8"/><path d="M2 6c-3 4 2 7 6 6.500M14 6c3 3-1 6-3 6" stroke="#0000ff" fill="none" stroke-width="1.8"/><path d="M7 10l3.500 2.500L7 15z" fill="#0000ff"/></svg>
<svg x="801" y="788" width="16" height="16" viewBox="0 0 16 16" overflow="visible"><rect x="5" y="1" width="6" height="13" fill="#ee0010" stroke="#600" stroke-width="0.8"/><path d="M14 6c3 4-2 7-6 6.500M2 6c-3 3 1 6 3 6" stroke="#0000ff" fill="none" stroke-width="1.8"/><path d="M9 10l-3.500 2.500L9 15z" fill="#0000ff"/></svg>
<svg x="823" y="788" width="16" height="16" viewBox="0 0 16 16" overflow="visible"><path d="M1 2l5-1 3 13-5 1z" fill="#ee0010" stroke="#600" stroke-width=".8"/><path d="M15.500 5H10" stroke="#0000ff" fill="none" stroke-width="2"/><path d="M11 2L7.500 5 11 8z" fill="#0000ff"/></svg>
<svg x="845" y="788" width="16" height="16" viewBox="0 0 16 16" overflow="visible"><path d="M15 2l-5-1-3 13 5 1z" fill="#ee0010" stroke="#600" stroke-width=".8"/><path d="M.5 5H6" stroke="#0000ff" fill="none" stroke-width="2"/><path d="M5 2l3.500 3L5 8z" fill="#0000ff"/></svg>
<svg x="867" y="788" width="16" height="16" viewBox="0 0 16 16" overflow="visible"><path d="M4 1h8l3.500 13.500H.5z" fill="#ee0010" stroke="#600" stroke-width=".8"/><path d="M0 11h16" stroke="#fff" fill="none" stroke-width="1"/><path d="M8 0v6" stroke="#0000ff" fill="none" stroke-width="2"/><path d="M5 5h6l-3 4z" fill="#0000ff"/></svg>
<text x="954" y="184" font-size="17.5" textLength="86" lengthAdjust="spacing">对象管理器</text>
<g><path d="M1050.500 168v15.500h15" stroke="#000" stroke-width="1.300" fill="none"/><path d="M1052 171l5 4 4-3 4.500 5" stroke="#e00000" stroke-width="1.400" fill="none"/><path d="M1052 178l5-5 4 3 4-4" stroke="#e00000" stroke-width="1" fill="none"/></g>
<g><path d="M1070.500 169.500h15v11h-5l-3.500 4v-4h-6.500z" fill="#fff" stroke="#1a6fe0" stroke-width="1.500"/><path d="M1078 171v8M1074 175h8" stroke="#e00000" stroke-width="1.600"/></g>
<path d="M1093.25 174.625h9.5l-4.75 4.75z" fill="#000"/>
<g stroke="#000" fill="none"><path d="M1113.500 172h4v6h-4zM1116.500 172v6M1111.500 178h8M1115.500 178v4" stroke-width="1.100"/><path d="M1128 173l8 8M1136 173l-8 8" stroke-width="1.600"/></g>
<path d="M1125 207.500l5-5 5 5M1125 264l5 5 5-5" stroke="#505050" stroke-width="1.500" fill="none"/>
<path d="M961 195v6h8M976 212v11h10M992.500 234v44M992.500 244h9M992.500 266h9" stroke="#9a9a9a" stroke-width="1" fill="none" stroke-dasharray="1 1.500"/>
<rect x="970.5" y="195.5" width="11" height="11" rx="1.500" fill="#f4f4f8" stroke="#a8a8b0" stroke-width="1"/><path d="M973.0 201.0h6" stroke="#3a56a8" stroke-width="1.600"/>
<rect x="985.5" y="194.5" width="15" height="15" fill="#fff" stroke="#333" stroke-width="1.100"/><path d="M988.5 202.0l3 3.500 6.500-7" stroke="#333" stroke-width="1.300" fill="none"/>
<text x="1005" y="207" font-size="14.5" textLength="40" lengthAdjust="spacing">Layer1</text>
<rect x="986.5" y="217.5" width="11" height="11" rx="1.500" fill="#f4f4f8" stroke="#a8a8b0" stroke-width="1"/><path d="M989.0 223.0h6" stroke="#3a56a8" stroke-width="1.600"/>
<rect x="1001.5" y="216.5" width="15" height="15" fill="#fff" stroke="#333" stroke-width="1.100"/><path d="M1004.5 224.0l3 3.500 6.500-7" stroke="#333" stroke-width="1.300" fill="none"/>
<text x="1021" y="229" font-size="14.5" textLength="15" lengthAdjust="spacing">g1</text>
<rect x="1017.5" y="238.5" width="15" height="15" fill="#fff" stroke="#333" stroke-width="1.100"/><path d="M1020.5 246.0l3 3.500 6.500-7" stroke="#333" stroke-width="1.300" fill="none"/>
<rect x="1017.5" y="260.5" width="15" height="15" fill="#fff" stroke="#333" stroke-width="1.100"/><path d="M1020.5 268.0l3 3.500 6.500-7" stroke="#333" stroke-width="1.300" fill="none"/>
<rect x="1038.500" y="238.500" width="41" height="14" fill="#ff0000" stroke="#888" stroke-width="1"/><rect x="1038.500" y="260.500" width="41" height="14" fill="#00ff00" stroke="#888" stroke-width="1"/>
<clipPath id="tc"><rect x="1080" y="195" width="39" height="83"/></clipPath>
<text x="1084" y="251" font-size="14.5" font-weight="bold" clip-path="url(#tc)">2022年</text>
<text x="1084" y="273" font-size="14.5" clip-path="url(#tc)">2023年</text>
<text x="954" y="307" font-size="16" textLength="35" lengthAdjust="spacing">Apps</text>
<path d="M1093.25 298.625h9.5l-4.75 4.75z" fill="#000"/>
<g stroke="#000" fill="none"><path d="M1113.500 296h4v6h-4zM1116.500 296v6M1111.500 302h8M1115.500 302v4" stroke-width="1.100"/><path d="M1128 297l8 8M1136 297l-8 8" stroke-width="1.600"/></g>
<path d="M1124 333l5-5 5 5M1124 797l5 5 5-5" stroke="#505050" stroke-width="1.500" fill="none"/>
<g fill="#000"><path d="M962 323h7v1.300h-7zM962 330.500h7l-3.500-4.500z"/><path d="M962 346h7l-3.500-4.500z"/><path d="M962 356h7l-3.500 4.500z"/><path d="M962 371.500h7l-3.500 4.500zM962 377h7v1.300h-7z" transform="translate(0 -4)"/></g>
<path d="M981 384 L955 396 V425 L981 438 M966 432.500 L955 442 V483 L981 496 M966 490 L955 500 V540 L981 553" fill="none" stroke="#7a7a7a" stroke-width="1"/>
<path d="M982 384 L955.500 396.500 V425 L982 438z" fill="#fff"/>
<text x="961" y="395.5" font-size="15.5" textLength="30" lengthAdjust="spacing" font-weight="bold" transform="rotate(90 961 395.5)">所有</text>
<text x="961" y="438.5" font-size="15.5" textLength="45" lengthAdjust="spacing" transform="rotate(90 961 438.5)">连接器</text>
<text x="961" y="495" font-size="15.5" textLength="30" lengthAdjust="spacing" transform="rotate(90 961 495)">统计</text>
<g><rect x="1009" y="321.500" width="34" height="34" fill="#e4eefa" stroke="#2a8ae0" stroke-width="1"/><rect x="1009" y="321.500" width="34" height="4" fill="#2a8ae0"/><rect x="1012" y="328" width="11" height="17" fill="#c4c4c4"/><rect x="1026" y="328" width="14" height="4" fill="#fff" stroke="#aaa" stroke-width=".8"/><rect x="1026" y="334" width="14" height="12" fill="#fff" stroke="#aaa" stroke-width=".8"/><path d="M1012 348h5M1012 351h5M1019 348h4M1019 351h4" stroke="#aaa" stroke-width="1.500"/><circle cx="1037" cy="349" r="10.500" fill="#3cb54a" stroke="#fff" stroke-width="1"/><path d="M1037 343v12M1031 349h12" stroke="#fff" stroke-width="3"/></g>
<g><rect x="1011" y="417" width="37" height="37" fill="#fdebc8"/><path d="M1013 436l2-4 2 2 2-9 2 5 2-10 2 8 2 3 2-2 2 4 2-8 2 6 2-3 2 6v2h-28z" fill="#e8283a"/><path d="M1013 440.500h33" stroke="#e8283a" stroke-width="1.800"/><circle cx="1028" cy="439" r="6" fill="#fdebc8" fill-opacity=".6" stroke="#2a2340" stroke-width="3"/><path d="M1033 444l7 6.500" stroke="#2a2340" stroke-width="3.600" stroke-linecap="round"/></g>
<g><path d="M1031 530.500l17.500 17.500" stroke="#3a3a4a" stroke-width="2.400"/><path d="M1021.2 510.8L1026.4 518.5L1035.7 517.2L1030.0 524.6L1034.0 533.0L1025.2 529.9L1018.5 536.3L1018.8 527.0L1010.6 522.6L1019.5 520.0z" fill="#e6c13c" stroke="#d8b030" stroke-width=".6" stroke-linejoin="round"/><path d="M1037 511.500v5M1034.500 514h5M1013.500 535.500v4M1011.500 537.500h4" stroke="#e6c13c" stroke-width="1.200"/></g>
<g><rect x="1010" y="604" width="38" height="38" fill="#2a4a82"/><path d="M1022 612h10l-6 24h-16l2-4h8zM1016 616h6M1014 620h8M1013 624h8M1012 628h8" fill="#fff" stroke="#fff" stroke-width="1.400" opacity=".92"/><path d="M1011 614h8M1011 618h6M1010 622h5M1010 626h4" stroke="#2a4a82" stroke-width="1.600"/><text x="1029" y="636" font-size="30" font-weight="bold" font-style="italic" fill="#a9d3f5">F</text></g>
<g><rect x="1009.500" y="697.500" width="38" height="38" fill="#a9c6ea" stroke="#dbe7f6" stroke-width="1.500"/><path d="M1015 732c16-1 27-9 30-31" fill="none" stroke="#f0a3cc" stroke-width="2.600"/><g fill="#fff"><circle cx="1017" cy="731" r="1.600"/><circle cx="1024" cy="729" r="1.600"/><circle cx="1031" cy="725" r="1.600"/><circle cx="1037" cy="718" r="1.600"/><circle cx="1041" cy="710" r="1.600"/><circle cx="1044" cy="702" r="1.600"/></g><path d="M1012 700v33h33" stroke="#f0f4fa" stroke-width="1" fill="none"/></g>
<clipPath id="wc"><rect x="1000" y="790" width="60" height="17"/></clipPath>
<g clip-path="url(#wcc)"><path d="M1020 799l16-3v20h-16z" fill="#2a5699"/><rect x="1036" y="798.500" width="10.500" height="16" fill="#fff" stroke="#2a5699" stroke-width="1.200"/><path d="M1039 803h6M1039 807h6" stroke="#2a5699" stroke-width="1.400"/><text x="1021.500" y="812.500" font-size="11" font-weight="bold" fill="#fff">W</text></g>
<text x="998" y="380" font-size="16" textLength="60" lengthAdjust="spacing">添加App</text>
<text x="1003" y="474" font-size="16" textLength="50" lengthAdjust="spacing">Theme</text>
<text x="1000" y="494" font-size="16" textLength="57" lengthAdjust="spacing">Preview</text>
<text x="1010" y="568" font-size="16" textLength="37" lengthAdjust="spacing">Stats</text>
<text x="1001" y="588" font-size="16" textLength="56" lengthAdjust="spacing">Advisor</text>
<text x="990" y="662" font-size="16" textLength="77" lengthAdjust="spacing">Speedy Fit</text>
<text x="993" y="756" font-size="16" textLength="72" lengthAdjust="spacing" fill="#8c8c8c">Simple Fit</text>
</svg></div></body></html>
